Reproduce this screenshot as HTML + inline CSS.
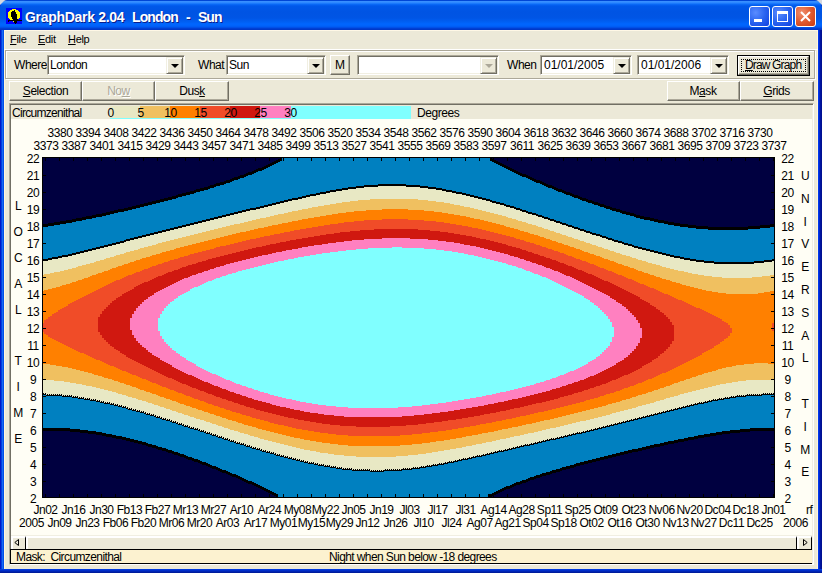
<!DOCTYPE html><html><head><meta charset="utf-8"><style>
*{margin:0;padding:0;box-sizing:border-box}
html,body{width:822px;height:573px;overflow:hidden;background:#d4d0c8}
body{position:relative;font-family:"Liberation Sans",sans-serif;font-size:11px;color:#000}
.a{position:absolute}
.t{position:absolute;white-space:nowrap;line-height:14px;font-size:12px;letter-spacing:-0.45px}
.m{font-size:11px;line-height:13px;letter-spacing:-0.3px}
.m u{text-underline-offset:1px}
.c{text-align:center}
u{text-decoration:underline;text-underline-offset:1px;text-decoration-thickness:1px}
.btn{position:absolute;background:#ece9d8;border-top:1px solid #fff;border-left:1px solid #fff;border-right:1px solid #716f64;border-bottom:1px solid #716f64;box-shadow:inset -1px -1px 0 #aca899;text-align:center}
.sunk{position:absolute;background:#fff;border-top:1px solid #aca899;border-left:1px solid #aca899;border-right:1px solid #fff;border-bottom:1px solid #fff;box-shadow:inset 1px 1px 0 #716f64,inset -1px -1px 0 #f1efe2}
.dd{position:absolute;background:#ece9d8;border-top:1px solid #f1efe2;border-left:1px solid #f1efe2;border-right:1px solid #716f64;border-bottom:1px solid #716f64;box-shadow:inset 1px 1px 0 #fff,inset -1px -1px 0 #aca899}
.arr{position:absolute;width:0;height:0;border-left:4px solid transparent;border-right:4px solid transparent;border-top:4px solid #000}
</style></head><body>
<div class="a" style="left:0;top:0;width:822px;height:573px;background:linear-gradient(to right,#0018c8 0,#0018c8 1px,#0040e0 1px,#0040e0 2px,#1868f4 2px,#1868f4 3px,#0050e8 3px,#0050e8 4px,transparent 4px,transparent 818px,#0040f0 818px,#0030e8 819px,#0018b0 820px,#001090 821px)"></div>
<div class="a" style="left:0;top:0;width:822px;height:30px;border-radius:7px 7px 0 0;background:linear-gradient(to bottom,#0046d6 0,#0046d6 1px,#3d92ff 1px,#2a86ff 3px,#0c6df9 4px,#0058ea 6px,#0054e3 12px,#0055e5 18px,#0060f4 22px,#0066ff 24px,#0062fa 26px,#0058f0 27px,#0048e0 28px,#0038c8 29px,#0038c8 30px)"></div>
<div class="a" style="left:0;top:569px;width:822px;height:4px;background:linear-gradient(to bottom,#0040e8,#0028c0 2px,#001890)"></div>
<div class="a" style="left:4px;top:30px;width:814px;height:539px;background:#ece9d8;border-left:1px solid #fff5dc;border-right:1px solid #fff5dc;border-top:1px solid #fff8e6"></div>
<svg class="a" style="left:6px;top:8px" width="16" height="16" shape-rendering="crispEdges"><rect width="16" height="16" fill="#0000ff"/><rect x="6" y="1" width="4" height="1" fill="#ffff00"/><rect x="4" y="2" width="8" height="1" fill="#ffff00"/><rect x="8" y="2" width="1" height="1" fill="#000"/><rect x="3" y="3" width="10" height="1" fill="#ffff00"/><rect x="6" y="3" width="3" height="1" fill="#000"/><rect x="2" y="4" width="12" height="1" fill="#ffff00"/><rect x="5" y="4" width="5" height="1" fill="#000"/><rect x="2" y="5" width="12" height="1" fill="#ffff00"/><rect x="5" y="5" width="5" height="1" fill="#000"/><rect x="2" y="6" width="12" height="1" fill="#ffff00"/><rect x="5" y="6" width="6" height="1" fill="#000"/><rect x="2" y="7" width="12" height="1" fill="#ffff00"/><rect x="5" y="7" width="6" height="1" fill="#000"/><rect x="2" y="8" width="12" height="1" fill="#ffff00"/><rect x="5" y="8" width="6" height="1" fill="#000"/><rect x="2" y="9" width="12" height="1" fill="#ffff00"/><rect x="6" y="9" width="5" height="1" fill="#000"/><rect x="3" y="10" width="10" height="1" fill="#ffff00"/><rect x="6" y="10" width="5" height="1" fill="#000"/><rect x="4" y="11" width="8" height="1" fill="#ffff00"/><rect x="7" y="11" width="5" height="1" fill="#000"/><rect x="2" y="12" width="14" height="1" fill="#000"/><rect x="2" y="13" width="1" height="1" fill="#000"/><rect x="7" y="13" width="1" height="1" fill="#ffff00"/><rect x="8" y="13" width="3" height="1" fill="#000"/><rect x="8" y="14" width="3" height="1" fill="#000"/><rect x="9" y="15" width="1" height="1" fill="#000"/></svg>
<div class="t " style="left:25px;top:9px;top:9px;font-size:14px;line-height:16px;font-weight:bold;color:#fff;text-shadow:1px 1px 0 #0a1e8c;letter-spacing:-0.3px">GraphDark 2.04</div>
<div class="t " style="left:132px;top:9px;top:9px;font-size:14px;line-height:16px;font-weight:bold;color:#fff;text-shadow:1px 1px 0 #0a1e8c;letter-spacing:-0.9px">London</div>
<div class="t " style="left:186px;top:9px;top:9px;font-size:14px;line-height:16px;font-weight:bold;color:#fff;text-shadow:1px 1px 0 #0a1e8c;">-</div>
<div class="t " style="left:198px;top:9px;top:9px;font-size:14px;line-height:16px;font-weight:bold;color:#fff;text-shadow:1px 1px 0 #0a1e8c;letter-spacing:-1px">Sun</div>
<div class="a" style="left:749px;top:6px;width:21px;height:21px;border:1px solid #fff;border-radius:3px;background:radial-gradient(circle at 30% 30%,#5a8cff 0,#2a64f0 50%,#1040e0 100%)"></div>
<div class="a" style="left:772px;top:6px;width:21px;height:21px;border:1px solid #fff;border-radius:3px;background:radial-gradient(circle at 30% 30%,#5a8cff 0,#2a64f0 50%,#1040e0 100%)"></div>
<div class="a" style="left:795px;top:6px;width:21px;height:21px;border:1px solid #fff;border-radius:3px;background:radial-gradient(circle at 30% 30%,#f09070 0,#e05a30 50%,#c83a10 100%)"></div>
<div class="a" style="left:754px;top:19px;width:8px;height:3px;background:#fff"></div>
<div class="a" style="left:777px;top:11px;width:11px;height:11px;border:1px solid #fff;border-top-width:3px"></div>
<svg class="a" style="left:799px;top:10px" width="13" height="13"><path d="M2 2L11 11M11 2L2 11" stroke="#fff" stroke-width="2"/></svg>
<div class="t m" style="left:10px;top:33px;"><u>F</u>ile</div>
<div class="t m" style="left:38px;top:33px;"><u>E</u>dit</div>
<div class="t m" style="left:68px;top:33px;"><u>H</u>elp</div>
<div class="a" style="left:4px;top:49px;width:814px;height:1px;background:#fff"></div>
<div class="a" style="left:5px;top:50px;width:810px;height:29px;border:1px solid #aca899;box-shadow:inset 1px 1px 0 #fff,1px 1px 0 #fff"></div>
<div class="t " style="left:14px;top:58px;">Where</div>
<div class="sunk" style="left:47px;top:55px;width:138px;height:20px"></div><div class="t " style="left:50px;top:58px;">London</div><div class="dd" style="left:166px;top:57px;width:17px;height:17px"></div><div class="arr" style="left:171px;top:64px;border-top-color:#000"></div>
<div class="t " style="left:198px;top:58px;">What</div>
<div class="sunk" style="left:226px;top:55px;width:100px;height:20px"></div><div class="t " style="left:229px;top:58px;">Sun</div><div class="dd" style="left:307px;top:57px;width:17px;height:17px"></div><div class="arr" style="left:312px;top:64px;border-top-color:#000"></div>
<div class="btn" style="left:330px;top:55px;width:20px;height:20px"></div><div class="t " style="left:335px;top:58px;">M</div>
<div class="sunk" style="left:357px;top:55px;width:142px;height:20px"></div><div class="dd" style="left:480px;top:57px;width:17px;height:17px"></div><div class="arr" style="left:485px;top:64px;border-top-color:#aca899"></div>
<div class="t " style="left:507px;top:58px;">When</div>
<div class="sunk" style="left:540px;top:55px;width:92px;height:20px"></div><div class="dd" style="left:613px;top:57px;width:17px;height:17px"></div><div class="arr" style="left:618px;top:64px;border-top-color:#000"></div>
<div class="t " style="left:544px;top:58px;letter-spacing:0">01/01/2005</div>
<div class="sunk" style="left:637px;top:55px;width:92px;height:20px"></div><div class="dd" style="left:710px;top:57px;width:17px;height:17px"></div><div class="arr" style="left:715px;top:64px;border-top-color:#000"></div>
<div class="t " style="left:641px;top:58px;letter-spacing:0">01/01/2006</div>
<div class="a" style="left:737px;top:55px;width:73px;height:21px;border:1px solid #000;"><div class="btn" style="left:0;top:0;width:71px;height:19px"></div><div class="a" style="left:3px;top:3px;width:65px;height:13px;border:1px dotted #000"></div></div>
<div class="t " style="left:745px;top:58px;letter-spacing:-0.85px"><u>D</u>raw Graph</div>
<div class="btn" style="left:9px;top:81px;width:73px;height:20px"></div><div class="t c" style="left:10.5px;top:84px;width:70px;"><u>S</u>election</div>
<div class="btn" style="left:82px;top:81px;width:73px;height:20px"></div><div class="t c" style="left:83.5px;top:84px;width:70px;color:#aca899;text-shadow:1px 1px 0 #fff">No<u>w</u></div>
<div class="btn" style="left:155px;top:81px;width:74px;height:20px"></div><div class="t c" style="left:157.0px;top:84px;width:70px;">Dus<u>k</u></div>
<div class="btn" style="left:667px;top:81px;width:73px;height:20px"></div><div class="t c" style="left:668.0px;top:84px;width:70px;">M<u>a</u>sk</div>
<div class="btn" style="left:740px;top:81px;width:74px;height:20px"></div><div class="t c" style="left:741.5px;top:84px;width:70px;"><u>G</u>rids</div>
<div class="a" style="left:9px;top:103px;width:805px;height:462px;border-top:1px solid #aca899;border-left:1px solid #aca899;border-right:1px solid #fff;border-bottom:1px solid #fff;box-shadow:inset 1px 1px 0 #716f64,inset -1px -1px 0 #f1efe2"></div>
<div class="a" style="left:11px;top:119px;width:801px;height:416px;background:#fffef5"></div>
<div class="t " style="left:12px;top:106px;letter-spacing:-0.7px">Circumzenithal</div>
<div class="a" style="left:110px;top:106px;width:30px;height:12px;background:#e8e8c4"></div>
<div class="a" style="left:140px;top:106px;width:30px;height:12px;background:#f0c060"></div>
<div class="a" style="left:170px;top:106px;width:30px;height:12px;background:#ff8000"></div>
<div class="a" style="left:200px;top:106px;width:30px;height:12px;background:#f04c28"></div>
<div class="a" style="left:230px;top:106px;width:30px;height:12px;background:#d01810"></div>
<div class="a" style="left:260px;top:106px;width:31px;height:12px;background:#ff80c0"></div>
<div class="a" style="left:291px;top:106px;width:120px;height:12px;background:#80ffff"></div>
<div class="a" style="left:110px;top:118px;width:301px;height:1px;background:#80ffff"></div>
<div class="t c" style="left:95.5px;top:106px;width:30px;">0</div>
<div class="t c" style="left:125.5px;top:106px;width:30px;">5</div>
<div class="t c" style="left:155.5px;top:106px;width:30px;">10</div>
<div class="t c" style="left:185.5px;top:106px;width:30px;">15</div>
<div class="t c" style="left:215.5px;top:106px;width:30px;">20</div>
<div class="t c" style="left:245.5px;top:106px;width:30px;">25</div>
<div class="t c" style="left:275.5px;top:106px;width:30px;">30</div>
<div class="t " style="left:417px;top:106px;">Degrees</div>
<div class="t c" style="left:45.0px;top:126px;width:30px;">3380</div>
<div class="t c" style="left:73.0px;top:126px;width:30px;">3394</div>
<div class="t c" style="left:101.0px;top:126px;width:30px;">3408</div>
<div class="t c" style="left:129.0px;top:126px;width:30px;">3422</div>
<div class="t c" style="left:157.0px;top:126px;width:30px;">3436</div>
<div class="t c" style="left:185.0px;top:126px;width:30px;">3450</div>
<div class="t c" style="left:213.0px;top:126px;width:30px;">3464</div>
<div class="t c" style="left:241.0px;top:126px;width:30px;">3478</div>
<div class="t c" style="left:269.0px;top:126px;width:30px;">3492</div>
<div class="t c" style="left:297.0px;top:126px;width:30px;">3506</div>
<div class="t c" style="left:325.0px;top:126px;width:30px;">3520</div>
<div class="t c" style="left:353.0px;top:126px;width:30px;">3534</div>
<div class="t c" style="left:381.0px;top:126px;width:30px;">3548</div>
<div class="t c" style="left:409.0px;top:126px;width:30px;">3562</div>
<div class="t c" style="left:437.0px;top:126px;width:30px;">3576</div>
<div class="t c" style="left:465.0px;top:126px;width:30px;">3590</div>
<div class="t c" style="left:493.0px;top:126px;width:30px;">3604</div>
<div class="t c" style="left:521.0px;top:126px;width:30px;">3618</div>
<div class="t c" style="left:549.0px;top:126px;width:30px;">3632</div>
<div class="t c" style="left:577.0px;top:126px;width:30px;">3646</div>
<div class="t c" style="left:605.0px;top:126px;width:30px;">3660</div>
<div class="t c" style="left:633.0px;top:126px;width:30px;">3674</div>
<div class="t c" style="left:661.0px;top:126px;width:30px;">3688</div>
<div class="t c" style="left:689.0px;top:126px;width:30px;">3702</div>
<div class="t c" style="left:717.0px;top:126px;width:30px;">3716</div>
<div class="t c" style="left:745.0px;top:126px;width:30px;">3730</div>
<div class="t c" style="left:31.0px;top:139px;width:30px;">3373</div>
<div class="t c" style="left:59.0px;top:139px;width:30px;">3387</div>
<div class="t c" style="left:87.0px;top:139px;width:30px;">3401</div>
<div class="t c" style="left:115.0px;top:139px;width:30px;">3415</div>
<div class="t c" style="left:143.0px;top:139px;width:30px;">3429</div>
<div class="t c" style="left:171.0px;top:139px;width:30px;">3443</div>
<div class="t c" style="left:199.0px;top:139px;width:30px;">3457</div>
<div class="t c" style="left:227.0px;top:139px;width:30px;">3471</div>
<div class="t c" style="left:255.0px;top:139px;width:30px;">3485</div>
<div class="t c" style="left:283.0px;top:139px;width:30px;">3499</div>
<div class="t c" style="left:311.0px;top:139px;width:30px;">3513</div>
<div class="t c" style="left:339.0px;top:139px;width:30px;">3527</div>
<div class="t c" style="left:367.0px;top:139px;width:30px;">3541</div>
<div class="t c" style="left:395.0px;top:139px;width:30px;">3555</div>
<div class="t c" style="left:423.0px;top:139px;width:30px;">3569</div>
<div class="t c" style="left:451.0px;top:139px;width:30px;">3583</div>
<div class="t c" style="left:479.0px;top:139px;width:30px;">3597</div>
<div class="t c" style="left:507.0px;top:139px;width:30px;">3611</div>
<div class="t c" style="left:535.0px;top:139px;width:30px;">3625</div>
<div class="t c" style="left:563.0px;top:139px;width:30px;">3639</div>
<div class="t c" style="left:591.0px;top:139px;width:30px;">3653</div>
<div class="t c" style="left:619.0px;top:139px;width:30px;">3667</div>
<div class="t c" style="left:647.0px;top:139px;width:30px;">3681</div>
<div class="t c" style="left:675.0px;top:139px;width:30px;">3695</div>
<div class="t c" style="left:703.0px;top:139px;width:30px;">3709</div>
<div class="t c" style="left:731.0px;top:139px;width:30px;">3723</div>
<div class="t c" style="left:759.0px;top:139px;width:30px;">3737</div>
<div class="t c" style="left:30.5px;top:503px;width:30px;">Jn02</div>
<div class="t c" style="left:58.5px;top:503px;width:30px;">Jn16</div>
<div class="t c" style="left:86.5px;top:503px;width:30px;">Jn30</div>
<div class="t c" style="left:114.5px;top:503px;width:30px;">Fb13</div>
<div class="t c" style="left:142.5px;top:503px;width:30px;">Fb27</div>
<div class="t c" style="left:170.5px;top:503px;width:30px;">Mr13</div>
<div class="t c" style="left:198.5px;top:503px;width:30px;">Mr27</div>
<div class="t c" style="left:226.5px;top:503px;width:30px;">Ar10</div>
<div class="t c" style="left:254.5px;top:503px;width:30px;">Ar24</div>
<div class="t c" style="left:282.5px;top:503px;width:30px;">My08</div>
<div class="t c" style="left:310.5px;top:503px;width:30px;">My22</div>
<div class="t c" style="left:338.5px;top:503px;width:30px;">Jn05</div>
<div class="t c" style="left:366.5px;top:503px;width:30px;">Jn19</div>
<div class="t c" style="left:394.5px;top:503px;width:30px;">Jl03</div>
<div class="t c" style="left:422.5px;top:503px;width:30px;">Jl17</div>
<div class="t c" style="left:450.5px;top:503px;width:30px;">Jl31</div>
<div class="t c" style="left:478.5px;top:503px;width:30px;">Ag14</div>
<div class="t c" style="left:506.5px;top:503px;width:30px;">Ag28</div>
<div class="t c" style="left:534.5px;top:503px;width:30px;">Sp11</div>
<div class="t c" style="left:562.5px;top:503px;width:30px;">Sp25</div>
<div class="t c" style="left:590.5px;top:503px;width:30px;">Ot09</div>
<div class="t c" style="left:618.5px;top:503px;width:30px;">Ot23</div>
<div class="t c" style="left:646.5px;top:503px;width:30px;">Nv06</div>
<div class="t c" style="left:674.5px;top:503px;width:30px;">Nv20</div>
<div class="t c" style="left:702.5px;top:503px;width:30px;">Dc04</div>
<div class="t c" style="left:730.5px;top:503px;width:30px;">Dc18</div>
<div class="t c" style="left:758.5px;top:503px;width:30px;">Jn01</div>
<div class="t c" style="left:16.5px;top:516px;width:30px;">2005</div>
<div class="t c" style="left:44.5px;top:516px;width:30px;">Jn09</div>
<div class="t c" style="left:72.5px;top:516px;width:30px;">Jn23</div>
<div class="t c" style="left:100.5px;top:516px;width:30px;">Fb06</div>
<div class="t c" style="left:128.5px;top:516px;width:30px;">Fb20</div>
<div class="t c" style="left:156.5px;top:516px;width:30px;">Mr06</div>
<div class="t c" style="left:184.5px;top:516px;width:30px;">Mr20</div>
<div class="t c" style="left:212.5px;top:516px;width:30px;">Ar03</div>
<div class="t c" style="left:240.5px;top:516px;width:30px;">Ar17</div>
<div class="t c" style="left:268.5px;top:516px;width:30px;">My01</div>
<div class="t c" style="left:296.5px;top:516px;width:30px;">My15</div>
<div class="t c" style="left:324.5px;top:516px;width:30px;">My29</div>
<div class="t c" style="left:352.5px;top:516px;width:30px;">Jn12</div>
<div class="t c" style="left:380.5px;top:516px;width:30px;">Jn26</div>
<div class="t c" style="left:408.5px;top:516px;width:30px;">Jl10</div>
<div class="t c" style="left:436.5px;top:516px;width:30px;">Jl24</div>
<div class="t c" style="left:464.5px;top:516px;width:30px;">Ag07</div>
<div class="t c" style="left:492.5px;top:516px;width:30px;">Ag21</div>
<div class="t c" style="left:520.5px;top:516px;width:30px;">Sp04</div>
<div class="t c" style="left:548.5px;top:516px;width:30px;">Sp18</div>
<div class="t c" style="left:576.5px;top:516px;width:30px;">Ot02</div>
<div class="t c" style="left:604.5px;top:516px;width:30px;">Ot16</div>
<div class="t c" style="left:632.5px;top:516px;width:30px;">Ot30</div>
<div class="t c" style="left:660.5px;top:516px;width:30px;">Nv13</div>
<div class="t c" style="left:688.5px;top:516px;width:30px;">Nv27</div>
<div class="t c" style="left:716.5px;top:516px;width:30px;">Dc11</div>
<div class="t c" style="left:744.5px;top:516px;width:30px;">Dc25</div>
<div class="t " style="left:783px;top:516px;">2006</div>
<div class="t " style="left:806px;top:503px;">rf</div>
<div class="t c" style="left:23.0px;top:492px;width:20px;">2</div>
<div class="t c" style="left:777.5px;top:492px;width:20px;">2</div>
<div class="t c" style="left:23.0px;top:475px;width:20px;">3</div>
<div class="t c" style="left:777.5px;top:475px;width:20px;">3</div>
<div class="t c" style="left:23.0px;top:458px;width:20px;">4</div>
<div class="t c" style="left:777.5px;top:458px;width:20px;">4</div>
<div class="t c" style="left:23.0px;top:441px;width:20px;">5</div>
<div class="t c" style="left:777.5px;top:441px;width:20px;">5</div>
<div class="t c" style="left:23.0px;top:424px;width:20px;">6</div>
<div class="t c" style="left:777.5px;top:424px;width:20px;">6</div>
<div class="t c" style="left:23.0px;top:407px;width:20px;">7</div>
<div class="t c" style="left:777.5px;top:407px;width:20px;">7</div>
<div class="t c" style="left:23.0px;top:390px;width:20px;">8</div>
<div class="t c" style="left:777.5px;top:390px;width:20px;">8</div>
<div class="t c" style="left:23.0px;top:373px;width:20px;">9</div>
<div class="t c" style="left:777.5px;top:373px;width:20px;">9</div>
<div class="t c" style="left:23.0px;top:356px;width:20px;">10</div>
<div class="t c" style="left:777.5px;top:356px;width:20px;">10</div>
<div class="t c" style="left:23.0px;top:339px;width:20px;">11</div>
<div class="t c" style="left:777.5px;top:339px;width:20px;">11</div>
<div class="t c" style="left:23.0px;top:322px;width:20px;">12</div>
<div class="t c" style="left:777.5px;top:322px;width:20px;">12</div>
<div class="t c" style="left:23.0px;top:305px;width:20px;">13</div>
<div class="t c" style="left:777.5px;top:305px;width:20px;">13</div>
<div class="t c" style="left:23.0px;top:288px;width:20px;">14</div>
<div class="t c" style="left:777.5px;top:288px;width:20px;">14</div>
<div class="t c" style="left:23.0px;top:271px;width:20px;">15</div>
<div class="t c" style="left:777.5px;top:271px;width:20px;">15</div>
<div class="t c" style="left:23.0px;top:254px;width:20px;">16</div>
<div class="t c" style="left:777.5px;top:254px;width:20px;">16</div>
<div class="t c" style="left:23.0px;top:237px;width:20px;">17</div>
<div class="t c" style="left:777.5px;top:237px;width:20px;">17</div>
<div class="t c" style="left:23.0px;top:220px;width:20px;">18</div>
<div class="t c" style="left:777.5px;top:220px;width:20px;">18</div>
<div class="t c" style="left:23.0px;top:203px;width:20px;">19</div>
<div class="t c" style="left:777.5px;top:203px;width:20px;">19</div>
<div class="t c" style="left:23.0px;top:186px;width:20px;">20</div>
<div class="t c" style="left:777.5px;top:186px;width:20px;">20</div>
<div class="t c" style="left:23.0px;top:169px;width:20px;">21</div>
<div class="t c" style="left:777.5px;top:169px;width:20px;">21</div>
<div class="t c" style="left:23.0px;top:152px;width:20px;">22</div>
<div class="t c" style="left:777.5px;top:152px;width:20px;">22</div>
<div class="t c" style="left:11.0px;top:199px;width:14px;">L</div>
<div class="t c" style="left:11.0px;top:225px;width:14px;">O</div>
<div class="t c" style="left:11.0px;top:251px;width:14px;">C</div>
<div class="t c" style="left:11.0px;top:277px;width:14px;">A</div>
<div class="t c" style="left:11.0px;top:303px;width:14px;">L</div>
<div class="t c" style="left:11.0px;top:354px;width:14px;">T</div>
<div class="t c" style="left:11.0px;top:380px;width:14px;">I</div>
<div class="t c" style="left:11.0px;top:406px;width:14px;">M</div>
<div class="t c" style="left:11.0px;top:432px;width:14px;">E</div>
<div class="t c" style="left:798.0px;top:169px;width:14px;">U</div>
<div class="t c" style="left:798.0px;top:192px;width:14px;">N</div>
<div class="t c" style="left:798.0px;top:215px;width:14px;">I</div>
<div class="t c" style="left:798.0px;top:237px;width:14px;">V</div>
<div class="t c" style="left:798.0px;top:260px;width:14px;">E</div>
<div class="t c" style="left:798.0px;top:283px;width:14px;">R</div>
<div class="t c" style="left:798.0px;top:306px;width:14px;">S</div>
<div class="t c" style="left:798.0px;top:329px;width:14px;">A</div>
<div class="t c" style="left:798.0px;top:351px;width:14px;">L</div>
<div class="t c" style="left:798.0px;top:397px;width:14px;">T</div>
<div class="t c" style="left:798.0px;top:420px;width:14px;">I</div>
<div class="t c" style="left:798.0px;top:443px;width:14px;">M</div>
<div class="t c" style="left:798.0px;top:465px;width:14px;">E</div>
<svg width="733" height="341" viewBox="42 157 733 341" style="position:absolute;left:42px;top:157px" shape-rendering="crispEdges"><rect x="42" y="157" width="733" height="341" fill="#000"/><rect x="43" y="158" width="731" height="339" fill="#000040"/><path fill="#0080c0" d="M42 225V225H44V225H46V225H48V224H50V224H52V224H54V223H56V223H58V223H60V222H62V222H64V222H66V221H68V221H70V221H72V220H74V220H76V219H78V219H80V219H82V218H84V218H86V217H88V217H90V217H92V216H94V216H96V215H98V215H100V215H102V214H104V214H106V213H108V213H110V212H112V212H114V211H116V211H118V210H120V210H122V210H124V209H126V209H128V208H130V208H132V207H134V207H136V206H138V206H140V205H142V205H144V204H146V204H148V203H150V203H152V202H154V202H156V201H158V201H160V200H162V200H164V199H166V199H168V198H170V198H172V197H174V197H176V196H178V195H180V195H182V194H184V194H186V193H188V193H190V192H192V192H194V191H196V190H198V190H200V189H202V189H204V188H206V188H208V187H210V186H212V186H214V185H216V184H218V184H220V183H222V183H224V182H226V181H228V181H230V180H232V179H234V178H236V178H238V177H240V176H242V176H244V175H246V174H248V173H250V173H252V172H254V171H256V170H258V169H260V169H262V168H264V167H266V166H268V165H270V164H272V163H274V162H276V161H278V160H280V159H282V158H284V158H286V158H288V158H290V158H292V158H294V158H296V158H298V158H300V158H302V158H304V158H306V158H308V158H310V158H312V158H314V158H316V158H318V158H320V158H322V158H324V158H326V158H328V158H330V158H332V158H334V158H336V158H338V158H340V158H342V158H344V158H346V158H348V158H350V158H352V158H354V158H356V158H358V158H360V158H362V158H364V158H366V158H368V158H370V158H372V158H374V158H376V158H378V158H380V158H382V158H384V158H386V158H388V158H390V158H392V158H394V158H396V158H398V158H400V158H402V158H404V158H406V158H408V158H410V158H412V158H414V158H416V158H418V158H420V158H422V158H424V158H426V158H428V158H430V158H432V158H434V158H436V158H438V158H440V158H442V158H444V158H446V158H448V158H450V158H452V158H454V158H456V158H458V158H460V158H462V158H464V158H466V158H468V158H470V158H472V158H474V158H476V158H478V158H480V158H482V158H484V158H486V158H488V158H490V159H492V160H494V161H496V162H498V163H500V164H502V165H504V166H506V167H508V168H510V169H512V170H514V171H516V172H518V173H520V174H522V175H524V175H526V176H528V177H530V178H532V179H534V180H536V181H538V181H540V182H542V183H544V184H546V185H548V186H550V186H552V187H554V188H556V189H558V190H560V190H562V191H564V192H566V193H568V193H570V194H572V195H574V196H576V196H578V197H580V198H582V199H584V199H586V200H588V201H590V201H592V202H594V203H596V203H598V204H600V205H602V205H604V206H606V207H608V207H610V208H612V209H614V209H616V210H618V210H620V211H622V212H624V212H626V213H628V213H630V214H632V214H634V215H636V216H638V216H640V217H642V217H644V218H646V218H648V218H650V219H652V219H654V220H656V220H658V221H660V221H662V221H664V222H666V222H668V223H670V223H672V223H674V224H676V224H678V224H680V225H682V225H684V225H686V225H688V226H690V226H692V226H694V226H696V227H698V227H700V227H702V227H704V227H706V227H708V228H710V228H712V228H714V228H716V228H718V228H720V228H722V228H724V228H726V228H728V228H730V228H732V228H734V228H736V228H738V228H740V228H742V228H744V228H746V228H748V227H750V227H752V227H754V227H756V227H758V227H760V226H762V226H764V226H766V226H768V226H770V225H772V225H774V430H772V430H770V430H768V430H766V430H764V430H762V430H760V430H758V430H756V430H754V430H752V430H750V431H748V431H746V431H744V431H742V431H740V432H738V432H736V432H734V432H732V432H730V433H728V433H726V433H724V433H722V434H720V434H718V434H716V435H714V435H712V435H710V436H708V436H706V436H704V437H702V437H700V437H698V438H696V438H694V439H692V439H690V439H688V440H686V440H684V441H682V441H680V441H678V442H676V442H674V443H672V443H670V443H668V444H666V444H664V445H662V445H660V446H658V446H656V446H654V447H652V447H650V448H648V448H646V449H644V449H642V450H640V450H638V451H636V451H634V451H632V452H630V452H628V453H626V453H624V454H622V454H620V455H618V455H616V456H614V456H612V457H610V457H608V458H606V458H604V459H602V459H600V460H598V460H596V461H594V461H592V462H590V462H588V463H586V463H584V464H582V464H580V465H578V465H576V466H574V467H572V467H570V468H568V468H566V469H564V469H562V470H560V471H558V471H556V472H554V472H552V473H550V474H548V474H546V475H544V475H542V476H540V477H538V477H536V478H534V479H532V479H530V480H528V481H526V482H524V482H522V483H520V484H518V484H516V485H514V486H512V487H510V488H508V488H506V489H504V490H502V491H500V492H498V493H496V494H494V495H492V496H490V496H488V497H486V497H484V497H482V497H480V497H478V497H476V497H474V497H472V497H470V497H468V497H466V497H464V497H462V497H460V497H458V497H456V497H454V497H452V497H450V497H448V497H446V497H444V497H442V497H440V497H438V497H436V497H434V497H432V497H430V497H428V497H426V497H424V497H422V497H420V497H418V497H416V497H414V497H412V497H410V497H408V497H406V497H404V497H402V497H400V497H398V497H396V497H394V497H392V497H390V497H388V497H386V497H384V497H382V497H380V497H378V497H376V497H374V497H372V497H370V497H368V497H366V497H364V497H362V497H360V497H358V497H356V497H354V497H352V497H350V497H348V497H346V497H344V497H342V497H340V497H338V497H336V497H334V497H332V497H330V497H328V497H326V497H324V497H322V497H320V497H318V497H316V497H314V497H312V497H310V497H308V497H306V497H304V497H302V497H300V497H298V497H296V497H294V497H292V497H290V497H288V497H286V497H284V497H282V497H280V497H278V496H276V495H274V494H272V493H270V492H268V491H266V490H264V489H262V488H260V487H258V486H256V485H254V484H252V483H250V483H248V482H246V481H244V480H242V479H240V478H238V477H236V476H234V476H232V475H230V474H228V473H226V472H224V472H222V471H220V470H218V469H216V468H214V468H212V467H210V466H208V465H206V464H204V464H202V463H200V462H198V461H196V461H194V460H192V459H190V459H188V458H186V457H184V456H182V456H180V455H178V454H176V454H174V453H172V452H170V452H168V451H166V450H164V450H162V449H160V449H158V448H156V447H154V447H152V446H150V446H148V445H146V444H144V444H142V443H140V443H138V442H136V442H134V441H132V441H130V440H128V440H126V439H124V439H122V438H120V438H118V438H116V437H114V437H112V436H110V436H108V436H106V435H104V435H102V434H100V434H98V434H96V433H94V433H92V433H90V433H88V432H86V432H84V432H82V432H80V431H78V431H76V431H74V431H72V431H70V430H68V430H66V430H64V430H62V430H60V430H58V430H56V430H54V430H52V430H50V430H48V430H46V430H44V430H42Z"/><path fill="#e8e8c4" d="M42 261V261H44V261H46V261H48V260H50V260H52V259H54V259H56V259H58V258H60V258H62V257H64V257H66V257H68V256H70V256H72V255H74V255H76V254H78V254H80V253H82V253H84V252H86V252H88V251H90V251H92V250H94V250H96V249H98V249H100V248H102V248H104V247H106V247H108V246H110V246H112V245H114V245H116V244H118V244H120V243H122V243H124V242H126V241H128V241H130V240H132V240H134V239H136V239H138V238H140V238H142V237H144V237H146V236H148V236H150V235H152V235H154V234H156V234H158V233H160V233H162V232H164V232H166V231H168V231H170V230H172V230H174V229H176V229H178V228H180V228H182V227H184V227H186V226H188V226H190V225H192V225H194V224H196V224H198V223H200V223H202V222H204V222H206V221H208V221H210V220H212V220H214V219H216V219H218V218H220V218H222V217H224V217H226V216H228V216H230V215H232V215H234V214H236V214H238V213H240V213H242V212H244V212H246V211H248V211H250V210H252V210H254V210H256V209H258V209H260V208H262V208H264V207H266V207H268V206H270V206H272V205H274V205H276V204H278V204H280V203H282V203H284V202H286V202H288V201H290V201H292V200H294V200H296V200H298V199H300V199H302V198H304V198H306V197H308V197H310V196H312V196H314V196H316V195H318V195H320V194H322V194H324V194H326V193H328V193H330V192H332V192H334V192H336V191H338V191H340V191H342V190H344V190H346V190H348V189H350V189H352V189H354V189H356V188H358V188H360V188H362V188H364V187H366V187H368V187H370V187H372V187H374V187H376V187H378V186H380V186H382V186H384V186H386V186H388V186H390V186H392V186H394V186H396V186H398V186H400V186H402V186H404V186H406V187H408V187H410V187H412V187H414V187H416V187H418V187H420V188H422V188H424V188H426V188H428V189H430V189H432V189H434V189H436V190H438V190H440V190H442V191H444V191H446V192H448V192H450V192H452V193H454V193H456V194H458V194H460V194H462V195H464V195H466V196H468V196H470V197H472V197H474V198H476V198H478V199H480V199H482V200H484V200H486V201H488V201H490V202H492V203H494V203H496V204H498V204H500V205H502V205H504V206H506V207H508V207H510V208H512V208H514V209H516V210H518V210H520V211H522V212H524V212H526V213H528V214H530V214H532V215H534V215H536V216H538V217H540V217H542V218H544V219H546V219H548V220H550V221H552V221H554V222H556V223H558V223H560V224H562V225H564V225H566V226H568V227H570V227H572V228H574V229H576V229H578V230H580V231H582V231H584V232H586V233H588V233H590V234H592V235H594V235H596V236H598V236H600V237H602V238H604V238H606V239H608V240H610V240H612V241H614V242H616V242H618V243H620V243H622V244H624V245H626V245H628V246H630V246H632V247H634V248H636V248H638V249H640V249H642V250H644V250H646V251H648V251H650V252H652V252H654V253H656V253H658V254H660V254H662V255H664V255H666V256H668V256H670V257H672V257H674V258H676V258H678V258H680V259H682V259H684V260H686V260H688V260H690V261H692V261H694V261H696V262H698V262H700V262H702V262H704V263H706V263H708V263H710V263H712V263H714V264H716V264H718V264H720V264H722V264H724V264H726V264H728V264H730V264H732V264H734V264H736V264H738V264H740V264H742V264H744V264H746V264H748V264H750V264H752V264H754V263H756V263H758V263H760V263H762V263H764V262H766V262H768V262H770V262H772V261H774V393H772V393H770V393H768V393H766V393H764V393H762V394H760V394H758V394H756V394H754V394H752V394H750V394H748V394H746V395H744V395H742V395H740V395H738V395H736V396H734V396H732V396H730V397H728V397H726V397H724V398H722V398H720V398H718V399H716V399H714V399H712V400H710V400H708V401H706V401H704V402H702V402H700V402H698V403H696V403H694V404H692V404H690V405H688V405H686V406H684V406H682V407H680V407H678V408H676V408H674V409H672V409H670V410H668V410H666V411H664V411H662V412H660V412H658V413H656V413H654V414H652V414H650V415H648V415H646V416H644V416H642V417H640V417H638V418H636V418H634V419H632V419H630V420H628V420H626V421H624V421H622V422H620V422H618V423H616V423H614V424H612V424H610V425H608V425H606V426H604V426H602V427H600V427H598V428H596V428H594V429H592V429H590V430H588V430H586V431H584V431H582V432H580V432H578V432H576V433H574V433H572V434H570V434H568V435H566V435H564V436H562V436H560V437H558V437H556V438H554V438H552V438H550V439H548V439H546V440H544V440H542V441H540V441H538V442H536V442H534V443H532V443H530V444H528V444H526V444H524V445H522V445H520V446H518V446H516V447H514V447H512V448H510V448H508V449H506V449H504V450H502V450H500V450H498V451H496V451H494V452H492V452H490V453H488V453H486V454H484V454H482V455H480V455H478V455H476V456H474V456H472V457H470V457H468V458H466V458H464V458H462V459H460V459H458V460H456V460H454V461H452V461H450V461H448V462H446V462H444V463H442V463H440V463H438V464H436V464H434V464H432V465H430V465H428V465H426V466H424V466H422V466H420V467H418V467H416V467H414V467H412V468H410V468H408V468H406V468H404V468H402V469H400V469H398V469H396V469H394V469H392V469H390V469H388V469H386V469H384V470H382V470H380V470H378V470H376V470H374V470H372V470H370V469H368V469H366V469H364V469H362V469H360V469H358V469H356V469H354V469H352V468H350V468H348V468H346V468H344V468H342V467H340V467H338V467H336V466H334V466H332V466H330V465H328V465H326V465H324V464H322V464H320V464H318V463H316V463H314V462H312V462H310V462H308V461H306V461H304V460H302V460H300V459H298V459H296V458H294V458H292V457H290V457H288V456H286V456H284V455H282V455H280V454H278V454H276V453H274V452H272V452H270V451H268V451H266V450H264V450H262V449H260V448H258V448H256V447H254V447H252V446H250V445H248V445H246V444H244V443H242V443H240V442H238V442H236V441H234V440H232V440H230V439H228V438H226V438H224V437H222V436H220V436H218V435H216V434H214V434H212V433H210V432H208V432H206V431H204V430H202V430H200V429H198V428H196V428H194V427H192V427H190V426H188V425H186V425H184V424H182V423H180V423H178V422H176V421H174V421H172V420H170V419H168V419H166V418H164V418H162V417H160V416H158V416H156V415H154V414H152V414H150V413H148V413H146V412H144V411H142V411H140V410H138V410H136V409H134V409H132V408H130V408H128V407H126V406H124V406H122V405H120V405H118V404H116V404H114V403H112V403H110V402H108V402H106V402H104V401H102V401H100V400H98V400H96V399H94V399H92V399H90V398H88V398H86V398H84V397H82V397H80V397H78V396H76V396H74V396H72V395H70V395H68V395H66V395H64V395H62V394H60V394H58V394H56V394H54V394H52V394H50V394H48V394H46V393H44V393H42Z"/><path fill="#f0c060" d="M42 275V275H44V274H46V274H48V274H50V273H52V273H54V272H56V272H58V272H60V271H62V271H64V270H66V270H68V269H70V269H72V268H74V268H76V267H78V266H80V266H82V265H84V265H86V264H88V264H90V263H92V263H94V262H96V261H98V261H100V260H102V260H104V259H106V258H108V258H110V257H112V257H114V256H116V255H118V255H120V254H122V254H124V253H126V252H128V252H130V251H132V251H134V250H136V250H138V249H140V248H142V248H144V247H146V247H148V246H150V246H152V245H154V245H156V244H158V243H160V243H162V242H164V242H166V241H168V241H170V240H172V240H174V239H176V239H178V238H180V238H182V237H184V237H186V236H188V236H190V235H192V235H194V234H196V234H198V233H200V233H202V232H204V232H206V231H208V231H210V230H212V230H214V229H216V229H218V228H220V228H222V227H224V227H226V226H228V226H230V225H232V225H234V224H236V224H238V224H240V223H242V223H244V222H246V222H248V221H250V221H252V220H254V220H256V219H258V219H260V218H262V218H264V218H266V217H268V217H270V216H272V216H274V215H276V215H278V214H280V214H282V214H284V213H286V213H288V212H290V212H292V211H294V211H296V211H298V210H300V210H302V209H304V209H306V209H308V208H310V208H312V207H314V207H316V207H318V206H320V206H322V206H324V205H326V205H328V205H330V204H332V204H334V204H336V203H338V203H340V203H342V202H344V202H346V202H348V202H350V201H352V201H354V201H356V201H358V200H360V200H362V200H364V200H366V200H368V200H370V199H372V199H374V199H376V199H378V199H380V199H382V199H384V199H386V199H388V199H390V199H392V199H394V199H396V199H398V199H400V199H402V199H404V199H406V199H408V199H410V199H412V199H414V199H416V199H418V200H420V200H422V200H424V200H426V200H428V201H430V201H432V201H434V201H436V202H438V202H440V202H442V202H444V203H446V203H448V203H450V204H452V204H454V205H456V205H458V205H460V206H462V206H464V207H466V207H468V207H470V208H472V208H474V209H476V209H478V210H480V210H482V211H484V211H486V212H488V212H490V213H492V213H494V214H496V214H498V215H500V215H502V216H504V216H506V217H508V218H510V218H512V219H514V219H516V220H518V221H520V221H522V222H524V222H526V223H528V224H530V224H532V225H534V225H536V226H538V227H540V227H542V228H544V229H546V229H548V230H550V231H552V231H554V232H556V233H558V233H560V234H562V235H564V235H566V236H568V237H570V237H572V238H574V239H576V239H578V240H580V241H582V241H584V242H586V243H588V243H590V244H592V245H594V245H596V246H598V247H600V247H602V248H604V249H606V249H608V250H610V251H612V251H614V252H616V253H618V253H620V254H622V255H624V255H626V256H628V256H630V257H632V258H634V258H636V259H638V260H640V260H642V261H644V261H646V262H648V263H650V263H652V264H654V264H656V265H658V265H660V266H662V267H664V267H666V268H668V268H670V269H672V269H674V270H676V270H678V271H680V271H682V271H684V272H686V272H688V273H690V273H692V274H694V274H696V274H698V275H700V275H702V275H704V276H706V276H708V276H710V276H712V277H714V277H716V277H718V277H720V277H722V278H724V278H726V278H728V278H730V278H732V278H734V278H736V278H738V278H740V278H742V278H744V278H746V278H748V278H750V278H752V277H754V277H756V277H758V277H760V277H762V276H764V276H766V276H768V276H770V275H772V275H774V380H772V380H770V380H768V380H766V380H764V380H762V380H760V380H758V380H756V380H754V380H752V380H750V380H748V380H746V381H744V381H742V381H740V381H738V382H736V382H734V382H732V383H730V383H728V383H726V384H724V384H722V384H720V385H718V385H716V386H714V386H712V387H710V387H708V388H706V388H704V389H702V389H700V390H698V390H696V391H694V391H692V392H690V392H688V393H686V393H684V394H682V394H680V395H678V396H676V396H674V397H672V397H670V398H668V398H666V399H664V400H662V400H660V401H658V401H656V402H654V403H652V403H650V404H648V404H646V405H644V405H642V406H640V406H638V407H636V408H634V408H632V409H630V409H628V410H626V410H624V411H622V411H620V412H618V412H616V413H614V413H612V414H610V415H608V415H606V416H604V416H602V417H600V417H598V418H596V418H594V419H592V419H590V420H588V420H586V421H584V421H582V421H580V422H578V422H576V423H574V423H572V424H570V424H568V425H566V425H564V426H562V426H560V427H558V427H556V428H554V428H552V428H550V429H548V429H546V430H544V430H542V431H540V431H538V432H536V432H534V433H532V433H530V433H528V434H526V434H524V435H522V435H520V436H518V436H516V436H514V437H512V437H510V438H508V438H506V439H504V439H502V439H500V440H498V440H496V441H494V441H492V442H490V442H488V442H486V443H484V443H482V444H480V444H478V444H476V445H474V445H472V446H470V446H468V446H466V447H464V447H462V448H460V448H458V448H456V449H454V449H452V449H450V450H448V450H446V450H444V451H442V451H440V451H438V452H436V452H434V452H432V453H430V453H428V453H426V454H424V454H422V454H420V454H418V455H416V455H414V455H412V455H410V455H408V456H406V456H404V456H402V456H400V456H398V456H396V457H394V457H392V457H390V457H388V457H386V457H384V457H382V457H380V457H378V457H376V457H374V457H372V457H370V457H368V457H366V457H364V457H362V457H360V457H358V457H356V456H354V456H352V456H350V456H348V456H346V456H344V455H342V455H340V455H338V455H336V455H334V454H332V454H330V454H328V453H326V453H324V453H322V453H320V452H318V452H316V451H314V451H312V451H310V450H308V450H306V450H304V449H302V449H300V448H298V448H296V447H294V447H292V446H290V446H288V445H286V445H284V444H282V444H280V443H278V443H276V442H274V442H272V441H270V441H268V440H266V440H264V439H262V439H260V438H258V437H256V437H254V436H252V436H250V435H248V434H246V434H244V433H242V433H240V432H238V431H236V431H234V430H232V430H230V429H228V428H226V428H224V427H222V426H220V426H218V425H216V424H214V424H212V423H210V422H208V422H206V421H204V420H202V420H200V419H198V419H196V418H194V417H192V417H190V416H188V415H186V415H184V414H182V413H180V413H178V412H176V411H174V411H172V410H170V409H168V409H166V408H164V407H162V407H160V406H158V405H156V405H154V404H152V403H150V403H148V402H146V401H144V401H142V400H140V400H138V399H136V398H134V398H132V397H130V397H128V396H126V395H124V395H122V394H120V394H118V393H116V392H114V392H112V391H110V391H108V390H106V390H104V389H102V389H100V388H98V388H96V387H94V387H92V386H90V386H88V386H86V385H84V385H82V384H80V384H78V384H76V383H74V383H72V383H70V382H68V382H66V382H64V381H62V381H60V381H58V381H56V381H54V380H52V380H50V380H48V380H46V380H44V380H42Z"/><path fill="#ff8000" d="M42 291V291H44V290H46V290H48V289H50V289H52V288H54V288H56V287H58V287H60V286H62V285H64V285H66V284H68V284H70V283H72V282H74V282H76V281H78V280H80V280H82V279H84V278H86V278H88V277H90V276H92V275H94V275H96V274H98V273H100V273H102V272H104V271H106V271H108V270H110V269H112V268H114V268H116V267H118V266H120V266H122V265H124V264H126V264H128V263H130V262H132V262H134V261H136V260H138V260H140V259H142V258H144V258H146V257H148V257H150V256H152V255H154V255H156V254H158V254H160V253H162V252H164V252H166V251H168V251H170V250H172V250H174V249H176V248H178V248H180V247H182V247H184V246H186V246H188V245H190V245H192V244H194V244H196V243H198V243H200V242H202V242H204V241H206V241H208V240H210V240H212V239H214V239H216V238H218V238H220V237H222V237H224V236H226V236H228V235H230V235H232V234H234V234H236V233H238V233H240V232H242V232H244V232H246V231H248V231H250V230H252V230H254V229H256V229H258V228H260V228H262V228H264V227H266V227H268V226H270V226H272V225H274V225H276V225H278V224H280V224H282V223H284V223H286V223H288V222H290V222H292V221H294V221H296V221H298V220H300V220H302V219H304V219H306V219H308V218H310V218H312V218H314V217H316V217H318V217H320V216H322V216H324V216H326V215H328V215H330V215H332V214H334V214H336V214H338V213H340V213H342V213H344V213H346V212H348V212H350V212H352V212H354V211H356V211H358V211H360V211H362V211H364V211H366V210H368V210H370V210H372V210H374V210H376V210H378V210H380V210H382V209H384V209H386V209H388V209H390V209H392V209H394V209H396V209H398V209H400V209H402V209H404V209H406V209H408V210H410V210H412V210H414V210H416V210H418V210H420V210H422V210H424V211H426V211H428V211H430V211H432V211H434V212H436V212H438V212H440V212H442V213H444V213H446V213H448V214H450V214H452V214H454V215H456V215H458V215H460V216H462V216H464V216H466V217H468V217H470V218H472V218H474V219H476V219H478V219H480V220H482V220H484V221H486V221H488V222H490V222H492V223H494V223H496V224H498V224H500V225H502V225H504V226H506V227H508V227H510V228H512V228H514V229H516V229H518V230H520V231H522V231H524V232H526V232H528V233H530V234H532V234H534V235H536V235H538V236H540V237H542V237H544V238H546V239H548V239H550V240H552V241H554V241H556V242H558V243H560V243H562V244H564V245H566V245H568V246H570V247H572V247H574V248H576V249H578V249H580V250H582V251H584V252H586V252H588V253H590V254H592V254H594V255H596V256H598V256H600V257H602V258H604V259H606V259H608V260H610V261H612V261H614V262H616V263H618V264H620V264H622V265H624V266H626V266H628V267H630V268H632V268H634V269H636V270H638V271H640V271H642V272H644V273H646V273H648V274H650V275H652V275H654V276H656V277H658V277H660V278H662V279H664V279H666V280H668V280H670V281H672V282H674V282H676V283H678V283H680V284H682V285H684V285H686V286H688V286H690V287H692V287H694V288H696V288H698V289H700V289H702V290H704V290H706V291H708V291H710V291H712V292H714V292H716V292H718V293H720V293H722V293H724V293H726V294H728V294H730V294H732V294H734V294H736V294H738V294H740V294H742V294H744V294H746V294H748V294H750V294H752V294H754V294H756V294H758V293H760V293H762V293H764V292H766V292H768V292H770V291H772V291H774V364H772V364H770V364H768V363H766V363H764V363H762V363H760V363H758V363H756V363H754V364H752V364H750V364H748V364H746V364H744V365H742V365H740V365H738V365H736V366H734V366H732V367H730V367H728V367H726V368H724V368H722V369H720V369H718V370H716V371H714V371H712V372H710V372H708V373H706V373H704V374H702V375H700V375H698V376H696V377H694V377H692V378H690V379H688V379H686V380H684V381H682V381H680V382H678V383H676V383H674V384H672V385H670V386H668V386H666V387H664V388H662V388H660V389H658V390H656V390H654V391H652V392H650V392H648V393H646V394H644V394H642V395H640V395H638V396H636V397H634V397H632V398H630V399H628V399H626V400H624V400H622V401H620V402H618V402H616V403H614V403H612V404H610V404H608V405H606V406H604V406H602V407H600V407H598V408H596V408H594V409H592V409H590V410H588V410H586V411H584V411H582V412H580V412H578V413H576V413H574V414H572V414H570V415H568V415H566V416H564V416H562V417H560V417H558V418H556V418H554V419H552V419H550V420H548V420H546V420H544V421H542V421H540V422H538V422H536V423H534V423H532V424H530V424H528V424H526V425H524V425H522V426H520V426H518V427H516V427H514V427H512V428H510V428H508V429H506V429H504V429H502V430H500V430H498V431H496V431H494V432H492V432H490V432H488V433H486V433H484V433H482V434H480V434H478V435H476V435H474V435H472V436H470V436H468V436H466V437H464V437H462V438H460V438H458V438H456V439H454V439H452V439H450V440H448V440H446V440H444V441H442V441H440V441H438V441H436V442H434V442H432V442H430V443H428V443H426V443H424V443H422V444H420V444H418V444H416V444H414V444H412V445H410V445H408V445H406V445H404V445H402V445H400V446H398V446H396V446H394V446H392V446H390V446H388V446H386V446H384V446H382V446H380V446H378V446H376V446H374V446H372V446H370V446H368V446H366V446H364V446H362V446H360V446H358V446H356V446H354V446H352V446H350V446H348V445H346V445H344V445H342V445H340V445H338V444H336V444H334V444H332V444H330V443H328V443H326V443H324V443H322V442H320V442H318V442H316V441H314V441H312V441H310V440H308V440H306V440H304V439H302V439H300V438H298V438H296V438H294V437H292V437H290V436H288V436H286V435H284V435H282V434H280V434H278V433H276V433H274V432H272V432H270V431H268V431H266V430H264V430H262V429H260V429H258V428H256V427H254V427H252V426H250V426H248V425H246V425H244V424H242V423H240V423H238V422H236V421H234V421H232V420H230V420H228V419H226V418H224V418H222V417H220V416H218V416H216V415H214V414H212V414H210V413H208V412H206V412H204V411H202V410H200V410H198V409H196V408H194V408H192V407H190V406H188V406H186V405H184V404H182V404H180V403H178V402H176V401H174V401H172V400H170V399H168V399H166V398H164V397H162V397H160V396H158V395H156V394H154V394H152V393H150V392H148V392H146V391H144V390H142V390H140V389H138V388H136V387H134V387H132V386H130V385H128V385H126V384H124V383H122V383H120V382H118V381H116V381H114V380H112V379H110V379H108V378H106V378H104V377H102V376H100V376H98V375H96V375H94V374H92V373H90V373H88V372H86V372H84V371H82V371H80V370H78V370H76V369H74V369H72V368H70V368H68V367H66V367H64V367H62V366H60V366H58V366H56V365H54V365H52V365H50V364H48V364H46V364H44V364H42Z"/><path fill="#f04c28" d="M42 323V323H44V320H46V319H48V317H50V316H52V314H54V313H56V312H58V310H60V309H62V308H64V307H66V306H68V304H70V303H72V302H74V301H76V300H78V299H80V298H82V297H84V296H86V295H88V294H90V293H92V292H94V291H96V290H98V289H100V288H102V287H104V286H106V285H108V284H110V283H112V282H114V281H116V280H118V280H120V279H122V278H124V277H126V276H128V275H130V275H132V274H134V273H136V272H138V272H140V271H142V270H144V269H146V269H148V268H150V267H152V266H154V266H156V265H158V264H160V264H162V263H164V262H166V262H168V261H170V260H172V260H174V259H176V259H178V258H180V257H182V257H184V256H186V256H188V255H190V254H192V254H194V253H196V253H198V252H200V252H202V251H204V251H206V250H208V250H210V249H212V249H214V248H216V247H218V247H220V246H222V246H224V246H226V245H228V245H230V244H232V244H234V243H236V243H238V242H240V242H242V241H244V241H246V240H248V240H250V239H252V239H254V239H256V238H258V238H260V237H262V237H264V236H266V236H268V236H270V235H272V235H274V234H276V234H278V234H280V233H282V233H284V232H286V232H288V232H290V231H292V231H294V230H296V230H298V230H300V229H302V229H304V229H306V228H308V228H310V228H312V227H314V227H316V227H318V226H320V226H322V226H324V225H326V225H328V225H330V224H332V224H334V224H336V224H338V223H340V223H342V223H344V222H346V222H348V222H350V222H352V222H354V221H356V221H358V221H360V221H362V221H364V220H366V220H368V220H370V220H372V220H374V220H376V220H378V220H380V220H382V219H384V219H386V219H388V219H390V219H392V219H394V219H396V219H398V219H400V219H402V219H404V219H406V219H408V220H410V220H412V220H414V220H416V220H418V220H420V220H422V220H424V221H426V221H428V221H430V221H432V221H434V221H436V222H438V222H440V222H442V222H444V223H446V223H448V223H450V224H452V224H454V224H456V225H458V225H460V225H462V226H464V226H466V226H468V227H470V227H472V228H474V228H476V228H478V229H480V229H482V230H484V230H486V231H488V231H490V232H492V232H494V233H496V233H498V234H500V234H502V235H504V235H506V236H508V236H510V237H512V237H514V238H516V239H518V239H520V240H522V240H524V241H526V242H528V242H530V243H532V243H534V244H536V245H538V245H540V246H542V247H544V247H546V248H548V249H550V249H552V250H554V251H556V251H558V252H560V253H562V253H564V254H566V255H568V256H570V256H572V257H574V258H576V259H578V259H580V260H582V261H584V261H586V262H588V263H590V264H592V264H594V265H596V266H598V267H600V268H602V268H604V269H606V270H608V271H610V271H612V272H614V273H616V274H618V275H620V275H622V276H624V277H626V278H628V279H630V279H632V280H634V281H636V282H638V283H640V284H642V284H644V285H646V286H648V287H650V288H652V288H654V289H656V290H658V291H660V292H662V293H664V294H666V294H668V295H670V296H672V297H674V298H676V299H678V300H680V300H682V301H684V302H686V303H688V304H690V305H692V306H694V307H696V308H698V308H700V309H702V310H704V311H706V312H708V313H710V314H712V315H714V316H716V317H718V318H720V319H722V321H724V322H726V323H728V325H730V328H732V330H734V329H736V329H738V329H740V329H742V329H744V329H746V329H748V329H750V328H752V328H754V328H756V328H758V328H760V328H762V328H764V327H766V327H768V327H770V327H772V323H774V331H772V327H770V327H768V327H766V327H764V328H762V328H760V328H758V328H756V328H754V328H752V328H750V329H748V329H746V329H744V329H742V329H740V329H738V329H736V329H734V330H732V333H730V336H728V338H726V339H724V341H722V342H720V344H718V345H716V346H714V348H712V349H710V350H708V351H706V352H704V353H702V355H700V356H698V357H696V358H694V359H692V360H690V361H688V362H686V363H684V364H682V365H680V366H678V367H676V368H674V369H672V370H670V371H668V372H666V373H664V373H662V374H660V375H658V376H656V377H654V378H652V379H650V379H648V380H646V381H644V382H642V383H640V383H638V384H636V385H634V386H632V386H630V387H628V388H626V388H624V389H622V390H620V391H618V391H616V392H614V393H612V393H610V394H608V394H606V395H604V396H602V396H600V397H598V398H596V398H594V399H592V399H590V400H588V400H586V401H584V402H582V402H580V403H578V403H576V404H574V404H572V405H570V405H568V406H566V406H564V407H562V407H560V408H558V408H556V409H554V409H552V410H550V410H548V411H546V411H544V412H542V412H540V412H538V413H536V413H534V414H532V414H530V415H528V415H526V416H524V416H522V416H520V417H518V417H516V418H514V418H512V419H510V419H508V419H506V420H504V420H502V421H500V421H498V421H496V422H494V422H492V423H490V423H488V423H486V424H484V424H482V424H480V425H478V425H476V426H474V426H472V426H470V427H468V427H466V427H464V428H462V428H460V428H458V429H456V429H454V429H452V430H450V430H448V430H446V431H444V431H442V431H440V431H438V432H436V432H434V432H432V432H430V433H428V433H426V433H424V433H422V434H420V434H418V434H416V434H414V434H412V435H410V435H408V435H406V435H404V435H402V435H400V436H398V436H396V436H394V436H392V436H390V436H388V436H386V436H384V436H382V436H380V436H378V436H376V436H374V436H372V436H370V436H368V436H366V436H364V436H362V436H360V436H358V436H356V436H354V436H352V436H350V436H348V435H346V435H344V435H342V435H340V435H338V435H336V434H334V434H332V434H330V434H328V433H326V433H324V433H322V433H320V432H318V432H316V432H314V431H312V431H310V431H308V430H306V430H304V430H302V429H300V429H298V429H296V428H294V428H292V427H290V427H288V426H286V426H284V425H282V425H280V425H278V424H276V424H274V423H272V423H270V422H268V421H266V421H264V420H262V420H260V419H258V419H256V418H254V418H252V417H250V416H248V416H246V415H244V415H242V414H240V413H238V413H236V412H234V412H232V411H230V410H228V410H226V409H224V408H222V408H220V407H218V406H216V406H214V405H212V404H210V404H208V403H206V402H204V401H202V401H200V400H198V399H196V399H194V398H192V397H190V396H188V396H186V395H184V394H182V393H180V393H178V392H176V391H174V390H172V390H170V389H168V388H166V387H164V387H162V386H160V385H158V384H156V383H154V383H152V382H150V381H148V380H146V379H144V379H142V378H140V377H138V376H136V375H134V375H132V374H130V373H128V372H126V371H124V371H122V370H120V369H118V368H116V367H114V366H112V366H110V365H108V364H106V363H104V362H102V361H100V360H98V360H96V359H94V358H92V357H90V356H88V355H86V354H84V353H82V353H80V352H78V351H76V350H74V349H72V348H70V347H68V346H66V345H64V344H62V343H60V342H58V341H56V340H54V339H52V338H50V337H48V335H46V334H44V332H42Z"/><path fill="#d01810" d="M42 327V327H44V327H46V327H48V326H50V326H52V326H54V326H56V326H58V326H60V326H62V326H64V325H66V325H68V325H70V325H72V325H74V325H76V325H78V325H80V325H82V325H84V324H86V324H88V324H90V324H92V324H94V324H96V324H98V317H100V314H102V311H104V309H106V307H108V305H110V303H112V301H114V300H116V298H118V297H120V296H122V294H124V293H126V292H128V291H130V290H132V289H134V287H136V286H138V285H140V284H142V283H144V282H146V282H148V281H150V280H152V279H154V278H156V277H158V276H160V276H162V275H164V274H166V273H168V272H170V272H172V271H174V270H176V270H178V269H180V268H182V267H184V267H186V266H188V265H190V265H192V264H194V264H196V263H198V262H200V262H202V261H204V261H206V260H208V259H210V259H212V258H214V258H216V257H218V257H220V256H222V256H224V255H226V255H228V254H230V254H232V253H234V253H236V252H238V252H240V251H242V251H244V250H246V250H248V249H250V249H252V248H254V248H256V247H258V247H260V247H262V246H264V246H266V245H268V245H270V244H272V244H274V244H276V243H278V243H280V242H282V242H284V242H286V241H288V241H290V240H292V240H294V240H296V239H298V239H300V239H302V238H304V238H306V238H308V237H310V237H312V237H314V236H316V236H318V236H320V235H322V235H324V235H326V234H328V234H330V234H332V234H334V233H336V233H338V233H340V232H342V232H344V232H346V232H348V232H350V231H352V231H354V231H356V231H358V231H360V230H362V230H364V230H366V230H368V230H370V230H372V230H374V229H376V229H378V229H380V229H382V229H384V229H386V229H388V229H390V229H392V229H394V229H396V229H398V229H400V229H402V229H404V229H406V229H408V229H410V229H412V229H414V229H416V229H418V230H420V230H422V230H424V230H426V230H428V230H430V231H432V231H434V231H436V231H438V231H440V232H442V232H444V232H446V232H448V233H450V233H452V233H454V234H456V234H458V234H460V235H462V235H464V235H466V236H468V236H470V236H472V237H474V237H476V238H478V238H480V239H482V239H484V239H486V240H488V240H490V241H492V241H494V242H496V242H498V243H500V243H502V244H504V244H506V245H508V246H510V246H512V247H514V247H516V248H518V248H520V249H522V250H524V250H526V251H528V252H530V252H532V253H534V254H536V254H538V255H540V256H542V256H544V257H546V258H548V258H550V259H552V260H554V260H556V261H558V262H560V263H562V263H564V264H566V265H568V266H570V266H572V267H574V268H576V269H578V270H580V270H582V271H584V272H586V273H588V274H590V274H592V275H594V276H596V277H598V278H600V279H602V280H604V281H606V281H608V282H610V283H612V284H614V285H616V286H618V287H620V288H622V289H624V290H626V291H628V292H630V293H632V294H634V295H636V296H638V297H640V299H642V300H644V301H646V302H648V303H650V305H652V306H654V307H656V309H658V310H660V312H662V313H664V315H666V317H668V319H670V322H672V325H674V332H676V332H678V332H680V332H682V332H684V332H686V332H688V332H690V332H692V332H694V332H696V332H698V332H700V331H702V331H704V331H706V331H708V331H710V331H712V331H714V331H716V331H718V331H720V330H722V330H724V330H726V330H728V330H730V330H732V330H734V329H736V329H738V329H740V329H742V329H744V329H746V329H748V329H750V328H752V328H754V328H756V328H758V328H760V328H762V328H764V327H766V327H768V327H770V327H772V327H774V327H772V327H770V327H768V327H766V327H764V328H762V328H760V328H758V328H756V328H754V328H752V328H750V329H748V329H746V329H744V329H742V329H740V329H738V329H736V329H734V330H732V330H730V330H728V330H726V330H724V330H722V330H720V331H718V331H716V331H714V331H712V331H710V331H708V331H706V331H704V331H702V331H700V332H698V332H696V332H694V332H692V332H690V332H688V332H686V332H684V332H682V332H680V332H678V332H676V332H674V341H672V344H670V347H668V349H666V351H664V353H662V354H660V356H658V358H656V359H654V360H652V362H650V363H648V364H646V365H644V366H642V368H640V369H638V370H636V371H634V372H632V373H630V374H628V375H626V375H624V376H622V377H620V378H618V379H616V380H614V380H612V381H610V382H608V383H606V384H604V384H602V385H600V386H598V386H596V387H594V388H592V388H590V389H588V390H586V390H584V391H582V392H580V392H578V393H576V393H574V394H572V395H570V395H568V396H566V396H564V397H562V397H560V398H558V399H556V399H554V400H552V400H550V401H548V401H546V402H544V402H542V403H540V403H538V403H536V404H534V404H532V405H530V405H528V406H526V406H524V407H522V407H520V408H518V408H516V408H514V409H512V409H510V410H508V410H506V411H504V411H502V411H500V412H498V412H496V413H494V413H492V413H490V414H488V414H486V414H484V415H482V415H480V416H478V416H476V416H474V417H472V417H470V417H468V418H466V418H464V418H462V419H460V419H458V419H456V420H454V420H452V420H450V420H448V421H446V421H444V421H442V422H440V422H438V422H436V422H434V423H432V423H430V423H428V423H426V424H424V424H422V424H420V424H418V425H416V425H414V425H412V425H410V425H408V425H406V426H404V426H402V426H400V426H398V426H396V426H394V426H392V426H390V427H388V427H386V427H384V427H382V427H380V427H378V427H376V427H374V427H372V427H370V427H368V427H366V427H364V427H362V427H360V427H358V427H356V426H354V426H352V426H350V426H348V426H346V426H344V426H342V426H340V425H338V425H336V425H334V425H332V425H330V424H328V424H326V424H324V424H322V423H320V423H318V423H316V422H314V422H312V422H310V421H308V421H306V421H304V420H302V420H300V420H298V419H296V419H294V418H292V418H290V418H288V417H286V417H284V416H282V416H280V415H278V415H276V414H274V414H272V413H270V413H268V412H266V412H264V411H262V411H260V410H258V410H256V409H254V408H252V408H250V407H248V407H246V406H244V405H242V405H240V404H238V403H236V403H234V402H232V401H230V401H228V400H226V399H224V399H222V398H220V397H218V397H216V396H214V395H212V394H210V394H208V393H206V392H204V391H202V391H200V390H198V389H196V388H194V388H192V387H190V386H188V385H186V384H184V384H182V383H180V382H178V381H176V380H174V379H172V378H170V378H168V377H166V376H164V375H162V374H160V373H158V372H156V371H154V370H152V369H150V368H148V367H146V366H144V365H142V364H140V363H138V362H136V361H134V360H132V359H130V358H128V357H126V355H124V354H122V353H120V351H118V350H116V349H114V347H112V346H110V344H108V342H106V340H104V338H102V335H100V332H98V324H96V324H94V324H92V324H90V324H88V324H86V324H84V325H82V325H80V325H78V325H76V325H74V325H72V325H70V325H68V325H66V325H64V326H62V326H60V326H58V326H56V326H54V326H52V326H50V326H48V327H46V327H44V327H42Z"/><path fill="#ff80c0" d="M42 327V327H44V327H46V327H48V326H50V326H52V326H54V326H56V326H58V326H60V326H62V326H64V325H66V325H68V325H70V325H72V325H74V325H76V325H78V325H80V325H82V325H84V324H86V324H88V324H90V324H92V324H94V324H96V324H98V324H100V324H102V324H104V324H106V324H108V324H110V324H112V324H114V324H116V324H118V324H120V324H122V324H124V324H126V324H128V324H130V318H132V314H134V311H136V308H138V306H140V304H142V302H144V300H146V299H148V297H150V296H152V295H154V293H156V292H158V291H160V290H162V289H164V288H166V287H168V286H170V285H172V284H174V283H176V282H178V281H180V280H182V279H184V278H186V278H188V277H190V276H192V275H194V275H196V274H198V273H200V273H202V272H204V271H206V271H208V270H210V269H212V269H214V268H216V267H218V267H220V266H222V266H224V265H226V264H228V264H230V263H232V263H234V262H236V262H238V261H240V261H242V260H244V260H246V259H248V259H250V258H252V258H254V257H256V257H258V256H260V256H262V255H264V255H266V255H268V254H270V254H272V253H274V253H276V252H278V252H280V252H282V251H284V251H286V250H288V250H290V250H292V249H294V249H296V249H298V248H300V248H302V247H304V247H306V247H308V246H310V246H312V246H314V245H316V245H318V245H320V245H322V244H324V244H326V244H328V243H330V243H332V243H334V243H336V242H338V242H340V242H342V242H344V241H346V241H348V241H350V241H352V240H354V240H356V240H358V240H360V240H362V240H364V239H366V239H368V239H370V239H372V239H374V239H376V239H378V239H380V239H382V238H384V238H386V238H388V238H390V238H392V238H394V238H396V238H398V238H400V238H402V238H404V238H406V238H408V238H410V239H412V239H414V239H416V239H418V239H420V239H422V239H424V239H426V239H428V240H430V240H432V240H434V240H436V240H438V241H440V241H442V241H444V241H446V242H448V242H450V242H452V242H454V243H456V243H458V243H460V244H462V244H464V245H466V245H468V245H470V246H472V246H474V246H476V247H478V247H480V248H482V248H484V249H486V249H488V250H490V250H492V251H494V251H496V252H498V252H500V253H502V253H504V254H506V254H508V255H510V256H512V256H514V257H516V257H518V258H520V259H522V259H524V260H526V261H528V261H530V262H532V263H534V263H536V264H538V265H540V265H542V266H544V267H546V268H548V268H550V269H552V270H554V271H556V271H558V272H560V273H562V274H564V275H566V276H568V276H570V277H572V278H574V279H576V280H578V281H580V282H582V283H584V284H586V285H588V286H590V287H592V288H594V289H596V290H598V291H600V292H602V293H604V294H606V295H608V296H610V298H612V299H614V300H616V302H618V303H620V304H622V306H624V307H626V309H628V311H630V313H632V315H634V317H636V320H638V323H640V328H642V333H644V333H646V333H648V333H650V333H652V333H654V333H656V333H658V333H660V333H662V333H664V333H666V333H668V332H670V332H672V332H674V332H676V332H678V332H680V332H682V332H684V332H686V332H688V332H690V332H692V332H694V332H696V332H698V332H700V331H702V331H704V331H706V331H708V331H710V331H712V331H714V331H716V331H718V331H720V330H722V330H724V330H726V330H728V330H730V330H732V330H734V329H736V329H738V329H740V329H742V329H744V329H746V329H748V329H750V328H752V328H754V328H756V328H758V328H760V328H762V328H764V327H766V327H768V327H770V327H772V327H774V327H772V327H770V327H768V327H766V327H764V328H762V328H760V328H758V328H756V328H754V328H752V328H750V329H748V329H746V329H744V329H742V329H740V329H738V329H736V329H734V330H732V330H730V330H728V330H726V330H724V330H722V330H720V331H718V331H716V331H714V331H712V331H710V331H708V331H706V331H704V331H702V331H700V332H698V332H696V332H694V332H692V332H690V332H688V332H686V332H684V332H682V332H680V332H678V332H676V332H674V332H672V332H670V332H668V333H666V333H664V333H662V333H660V333H658V333H656V333H654V333H652V333H650V333H648V333H646V333H644V333H642V338H640V343H638V346H636V349H634V351H632V353H630V355H628V357H626V358H624V360H622V361H620V362H618V363H616V365H614V366H612V367H610V368H608V369H606V370H604V371H602V372H600V373H598V374H596V375H594V376H592V376H590V377H588V378H586V379H584V380H582V380H580V381H578V382H576V382H574V383H572V384H570V384H568V385H566V386H564V386H562V387H560V388H558V388H556V389H554V389H552V390H550V391H548V391H546V392H544V392H542V393H540V393H538V394H536V394H534V395H532V395H530V396H528V396H526V397H524V397H522V398H520V398H518V399H516V399H514V399H512V400H510V400H508V401H506V401H504V402H502V402H500V402H498V403H496V403H494V404H492V404H490V404H488V405H486V405H484V406H482V406H480V406H478V407H476V407H474V407H472V408H470V408H468V408H466V409H464V409H462V409H460V410H458V410H456V410H454V411H452V411H450V411H448V412H446V412H444V412H442V412H440V413H438V413H436V413H434V413H432V414H430V414H428V414H426V414H424V415H422V415H420V415H418V415H416V415H414V416H412V416H410V416H408V416H406V416H404V416H402V417H400V417H398V417H396V417H394V417H392V417H390V417H388V417H386V417H384V417H382V417H380V417H378V417H376V417H374V417H372V417H370V417H368V417H366V417H364V417H362V417H360V417H358V417H356V417H354V417H352V417H350V417H348V417H346V417H344V416H342V416H340V416H338V416H336V416H334V415H332V415H330V415H328V415H326V415H324V414H322V414H320V414H318V413H316V413H314V413H312V413H310V412H308V412H306V412H304V411H302V411H300V410H298V410H296V410H294V409H292V409H290V408H288V408H286V407H284V407H282V407H280V406H278V406H276V405H274V405H272V404H270V403H268V403H266V402H264V402H262V401H260V401H258V400H256V400H254V399H252V398H250V398H248V397H246V396H244V396H242V395H240V394H238V394H236V393H234V392H232V392H230V391H228V390H226V389H224V389H222V388H220V387H218V386H216V386H214V385H212V384H210V383H208V382H206V382H204V381H202V380H200V379H198V378H196V377H194V376H192V375H190V375H188V374H186V373H184V372H182V371H180V370H178V369H176V368H174V367H172V365H170V364H168V363H166V362H164V361H162V360H160V358H158V357H156V356H154V355H152V353H150V352H148V350H146V348H144V347H142V345H140V343H138V341H136V338H134V335H132V330H130V324H128V324H126V324H124V324H122V324H120V324H118V324H116V324H114V324H112V324H110V324H108V324H106V324H104V324H102V324H100V324H98V324H96V324H94V324H92V324H90V324H88V324H86V324H84V325H82V325H80V325H78V325H76V325H74V325H72V325H70V325H68V325H66V325H64V326H62V326H60V326H58V326H56V326H54V326H52V326H50V326H48V327H46V327H44V327H42Z"/><path fill="#80ffff" d="M42 327V327H44V327H46V327H48V326H50V326H52V326H54V326H56V326H58V326H60V326H62V326H64V325H66V325H68V325H70V325H72V325H74V325H76V325H78V325H80V325H82V325H84V324H86V324H88V324H90V324H92V324H94V324H96V324H98V324H100V324H102V324H104V324H106V324H108V324H110V324H112V324H114V324H116V324H118V324H120V324H122V324H124V324H126V324H128V324H130V324H132V324H134V324H136V324H138V324H140V324H142V324H144V324H146V324H148V324H150V324H152V324H154V324H156V324H158V318H160V314H162V311H164V308H166V306H168V304H170V302H172V301H174V299H176V298H178V296H180V295H182V294H184V293H186V292H188V291H190V289H192V288H194V287H196V287H198V286H200V285H202V284H204V283H206V282H208V281H210V281H212V280H214V279H216V278H218V278H220V277H222V276H224V276H226V275H228V274H230V274H232V273H234V273H236V272H238V271H240V271H242V270H244V270H246V269H248V269H250V268H252V268H254V267H256V267H258V266H260V266H262V265H264V265H266V264H268V264H270V263H272V263H274V262H276V262H278V261H280V261H282V261H284V260H286V260H288V259H290V259H292V259H294V258H296V258H298V257H300V257H302V257H304V256H306V256H308V256H310V255H312V255H314V255H316V254H318V254H320V254H322V253H324V253H326V253H328V253H330V252H332V252H334V252H336V252H338V251H340V251H342V251H344V251H346V250H348V250H350V250H352V250H354V250H356V249H358V249H360V249H362V249H364V249H366V249H368V248H370V248H372V248H374V248H376V248H378V248H380V248H382V248H384V248H386V248H388V248H390V248H392V247H394V247H396V247H398V247H400V247H402V248H404V248H406V248H408V248H410V248H412V248H414V248H416V248H418V248H420V248H422V248H424V249H426V249H428V249H430V249H432V249H434V249H436V250H438V250H440V250H442V250H444V251H446V251H448V251H450V251H452V252H454V252H456V252H458V253H460V253H462V253H464V254H466V254H468V255H470V255H472V255H474V256H476V256H478V257H480V257H482V258H484V258H486V259H488V259H490V260H492V260H494V261H496V261H498V262H500V262H502V263H504V263H506V264H508V265H510V265H512V266H514V266H516V267H518V268H520V268H522V269H524V270H526V271H528V271H530V272H532V273H534V274H536V274H538V275H540V276H542V277H544V277H546V278H548V279H550V280H552V281H554V282H556V283H558V284H560V285H562V286H564V287H566V288H568V289H570V290H572V291H574V292H576V293H578V294H580V295H582V296H584V298H586V299H588V300H590V302H592V303H594V305H596V306H598V308H600V310H602V312H604V314H606V316H608V319H610V322H612V327H614V332H616V332H618V332H620V332H622V332H624V332H626V332H628V332H630V332H632V332H634V332H636V332H638V333H640V333H642V333H644V333H646V333H648V333H650V333H652V333H654V333H656V333H658V333H660V333H662V333H664V333H666V333H668V332H670V332H672V332H674V332H676V332H678V332H680V332H682V332H684V332H686V332H688V332H690V332H692V332H694V332H696V332H698V332H700V331H702V331H704V331H706V331H708V331H710V331H712V331H714V331H716V331H718V331H720V330H722V330H724V330H726V330H728V330H730V330H732V330H734V329H736V329H738V329H740V329H742V329H744V329H746V329H748V329H750V328H752V328H754V328H756V328H758V328H760V328H762V328H764V327H766V327H768V327H770V327H772V327H774V327H772V327H770V327H768V327H766V327H764V328H762V328H760V328H758V328H756V328H754V328H752V328H750V329H748V329H746V329H744V329H742V329H740V329H738V329H736V329H734V330H732V330H730V330H728V330H726V330H724V330H722V330H720V331H718V331H716V331H714V331H712V331H710V331H708V331H706V331H704V331H702V331H700V332H698V332H696V332H694V332H692V332H690V332H688V332H686V332H684V332H682V332H680V332H678V332H676V332H674V332H672V332H670V332H668V333H666V333H664V333H662V333H660V333H658V333H656V333H654V333H652V333H650V333H648V333H646V333H644V333H642V333H640V333H638V332H636V332H634V332H632V332H630V332H628V332H626V332H624V332H622V332H620V332H618V332H616V332H614V337H612V342H610V346H608V348H606V350H604V352H602V354H600V356H598V357H596V359H594V360H592V361H590V362H588V364H586V365H584V366H582V367H580V368H578V369H576V370H574V371H572V371H570V372H568V373H566V374H564V375H562V375H560V376H558V377H556V378H554V378H552V379H550V380H548V380H546V381H544V382H542V382H540V383H538V383H536V384H534V385H532V385H530V386H528V386H526V387H524V387H522V388H520V388H518V389H516V389H514V390H512V390H510V391H508V391H506V392H504V392H502V392H500V393H498V393H496V394H494V394H492V395H490V395H488V395H486V396H484V396H482V397H480V397H478V397H476V398H474V398H472V398H470V399H468V399H466V399H464V400H462V400H460V400H458V401H456V401H454V401H452V402H450V402H448V402H446V403H444V403H442V403H440V403H438V404H436V404H434V404H432V404H430V405H428V405H426V405H424V405H422V406H420V406H418V406H416V406H414V406H412V407H410V407H408V407H406V407H404V407H402V407H400V407H398V408H396V408H394V408H392V408H390V408H388V408H386V408H384V408H382V408H380V408H378V408H376V408H374V408H372V408H370V408H368V408H366V408H364V408H362V408H360V408H358V408H356V408H354V408H352V408H350V408H348V407H346V407H344V407H342V407H340V407H338V407H336V406H334V406H332V406H330V406H328V406H326V405H324V405H322V405H320V405H318V404H316V404H314V404H312V403H310V403H308V403H306V402H304V402H302V402H300V401H298V401H296V400H294V400H292V399H290V399H288V399H286V398H284V398H282V397H280V397H278V396H276V396H274V395H272V395H270V394H268V393H266V393H264V392H262V392H260V391H258V390H256V390H254V389H252V388H250V388H248V387H246V386H244V386H242V385H240V384H238V384H236V383H234V382H232V381H230V380H228V380H226V379H224V378H222V377H220V376H218V375H216V374H214V374H212V373H210V372H208V371H206V370H204V369H202V368H200V367H198V366H196V364H194V363H192V362H190V361H188V360H186V358H184V357H182V356H180V354H178V353H176V351H174V350H172V348H170V346H168V344H166V342H164V339H162V336H160V331H158V324H156V324H154V324H152V324H150V324H148V324H146V324H144V324H142V324H140V324H138V324H136V324H134V324H132V324H130V324H128V324H126V324H124V324H122V324H120V324H118V324H116V324H114V324H112V324H110V324H108V324H106V324H104V324H102V324H100V324H98V324H96V324H94V324H92V324H90V324H88V324H86V324H84V325H82V325H80V325H78V325H76V325H74V325H72V325H70V325H68V325H66V325H64V326H62V326H60V326H58V326H56V326H54V326H52V326H50V326H48V327H46V327H44V327H42Z"/><path fill="#000" d="M42 224h2v3h-2zM42 428h2v3h-2zM44 224h2v3h-2zM44 428h2v3h-2zM46 224h2v3h-2zM46 428h2v3h-2zM48 223h2v3h-2zM48 428h2v3h-2zM50 223h2v3h-2zM50 428h2v3h-2zM52 223h2v3h-2zM52 428h2v3h-2zM54 222h2v3h-2zM54 428h2v3h-2zM56 222h2v3h-2zM56 428h2v3h-2zM58 222h2v3h-2zM58 428h2v3h-2zM60 221h2v3h-2zM60 428h2v3h-2zM62 221h2v3h-2zM62 428h2v3h-2zM64 221h2v3h-2zM64 428h2v3h-2zM66 220h2v3h-2zM66 428h2v3h-2zM68 220h2v3h-2zM68 428h2v3h-2zM70 220h2v3h-2zM70 429h2v3h-2zM72 219h2v3h-2zM72 429h2v3h-2zM74 219h2v3h-2zM74 429h2v3h-2zM76 218h2v3h-2zM76 429h2v3h-2zM78 218h2v3h-2zM78 429h2v3h-2zM80 218h2v3h-2zM80 430h2v3h-2zM82 217h2v3h-2zM82 430h2v3h-2zM84 217h2v3h-2zM84 430h2v3h-2zM86 216h2v3h-2zM86 430h2v3h-2zM88 216h2v3h-2zM88 431h2v3h-2zM90 216h2v3h-2zM90 431h2v3h-2zM92 215h2v3h-2zM92 431h2v3h-2zM94 215h2v3h-2zM94 431h2v3h-2zM96 214h2v3h-2zM96 432h2v3h-2zM98 214h2v3h-2zM98 432h2v3h-2zM100 214h2v3h-2zM100 432h2v3h-2zM102 213h2v3h-2zM102 433h2v3h-2zM104 213h2v3h-2zM104 433h2v3h-2zM106 212h2v3h-2zM106 434h2v3h-2zM108 212h2v3h-2zM108 434h2v3h-2zM110 211h2v3h-2zM110 434h2v3h-2zM112 211h2v3h-2zM112 435h2v3h-2zM114 210h2v3h-2zM114 435h2v3h-2zM116 210h2v3h-2zM116 436h2v3h-2zM118 209h2v3h-2zM118 436h2v3h-2zM120 209h2v3h-2zM120 436h2v3h-2zM122 209h2v3h-2zM122 437h2v3h-2zM124 208h2v3h-2zM124 437h2v3h-2zM126 208h2v3h-2zM126 438h2v3h-2zM128 207h2v3h-2zM128 438h2v3h-2zM130 207h2v3h-2zM130 439h2v3h-2zM132 206h2v3h-2zM132 439h2v3h-2zM134 206h2v3h-2zM134 440h2v3h-2zM136 205h2v3h-2zM136 440h2v3h-2zM138 205h2v3h-2zM138 441h2v3h-2zM140 204h2v3h-2zM140 441h2v3h-2zM142 204h2v3h-2zM142 442h2v3h-2zM144 203h2v3h-2zM144 442h2v3h-2zM146 203h2v3h-2zM146 443h2v3h-2zM148 202h2v3h-2zM148 444h2v3h-2zM150 202h2v3h-2zM150 444h2v3h-2zM152 201h2v3h-2zM152 445h2v3h-2zM154 201h2v3h-2zM154 445h2v3h-2zM156 200h2v3h-2zM156 446h2v3h-2zM158 200h2v3h-2zM158 447h2v3h-2zM160 199h2v3h-2zM160 447h2v3h-2zM162 199h2v3h-2zM162 448h2v3h-2zM164 198h2v3h-2zM164 448h2v3h-2zM166 198h2v3h-2zM166 449h2v3h-2zM168 197h2v3h-2zM168 450h2v3h-2zM170 197h2v3h-2zM170 450h2v3h-2zM172 196h2v3h-2zM172 451h2v3h-2zM174 196h2v3h-2zM174 452h2v3h-2zM176 195h2v3h-2zM176 452h2v3h-2zM178 194h2v3h-2zM178 453h2v3h-2zM180 194h2v3h-2zM180 454h2v3h-2zM182 193h2v3h-2zM182 454h2v3h-2zM184 193h2v3h-2zM184 455h2v3h-2zM186 192h2v3h-2zM186 456h2v3h-2zM188 192h2v3h-2zM188 457h2v3h-2zM190 191h2v3h-2zM190 457h2v3h-2zM192 191h2v3h-2zM192 458h2v3h-2zM194 190h2v3h-2zM194 459h2v3h-2zM196 189h2v3h-2zM196 459h2v3h-2zM198 189h2v3h-2zM198 460h2v3h-2zM200 188h2v3h-2zM200 461h2v3h-2zM202 188h2v3h-2zM202 462h2v3h-2zM204 187h2v3h-2zM204 462h2v3h-2zM206 187h2v3h-2zM206 463h2v3h-2zM208 186h2v3h-2zM208 464h2v3h-2zM210 185h2v3h-2zM210 465h2v3h-2zM212 185h2v3h-2zM212 466h2v3h-2zM214 184h2v3h-2zM214 466h2v3h-2zM216 183h2v3h-2zM216 467h2v3h-2zM218 183h2v3h-2zM218 468h2v3h-2zM220 182h2v3h-2zM220 469h2v3h-2zM222 182h2v3h-2zM222 470h2v3h-2zM224 181h2v3h-2zM224 470h2v3h-2zM226 180h2v3h-2zM226 471h2v3h-2zM228 180h2v3h-2zM228 472h2v3h-2zM230 179h2v3h-2zM230 473h2v3h-2zM232 178h2v3h-2zM232 474h2v3h-2zM234 177h2v3h-2zM234 474h2v3h-2zM236 177h2v3h-2zM236 475h2v3h-2zM238 176h2v3h-2zM238 476h2v3h-2zM240 175h2v3h-2zM240 477h2v3h-2zM242 175h2v3h-2zM242 478h2v3h-2zM244 174h2v3h-2zM244 479h2v3h-2zM246 173h2v3h-2zM246 480h2v3h-2zM248 172h2v3h-2zM248 481h2v3h-2zM250 172h2v3h-2zM250 481h2v3h-2zM252 171h2v3h-2zM252 482h2v3h-2zM254 170h2v3h-2zM254 483h2v3h-2zM256 169h2v3h-2zM256 484h2v3h-2zM258 168h2v3h-2zM258 485h2v3h-2zM260 168h2v3h-2zM260 486h2v3h-2zM262 167h2v3h-2zM262 487h2v3h-2zM264 166h2v3h-2zM264 488h2v3h-2zM266 165h2v3h-2zM266 489h2v3h-2zM268 164h2v3h-2zM268 490h2v3h-2zM270 163h2v3h-2zM270 491h2v3h-2zM272 162h2v3h-2zM272 492h2v3h-2zM274 161h2v3h-2zM274 493h2v3h-2zM276 160h2v3h-2zM276 494h2v3h-2zM278 159h2v3h-2zM280 158h2v3h-2zM488 494h2v3h-2zM490 158h2v3h-2zM490 494h2v3h-2zM492 159h2v3h-2zM492 493h2v3h-2zM494 160h2v3h-2zM494 492h2v3h-2zM496 161h2v3h-2zM496 491h2v3h-2zM498 162h2v3h-2zM498 490h2v3h-2zM500 163h2v3h-2zM500 489h2v3h-2zM502 164h2v3h-2zM502 488h2v3h-2zM504 165h2v3h-2zM504 487h2v3h-2zM506 166h2v3h-2zM506 486h2v3h-2zM508 167h2v3h-2zM508 486h2v3h-2zM510 168h2v3h-2zM510 485h2v3h-2zM512 169h2v3h-2zM512 484h2v3h-2zM514 170h2v3h-2zM514 483h2v3h-2zM516 171h2v3h-2zM516 482h2v3h-2zM518 172h2v3h-2zM518 482h2v3h-2zM520 173h2v3h-2zM520 481h2v3h-2zM522 174h2v3h-2zM522 480h2v3h-2zM524 174h2v3h-2zM524 480h2v3h-2zM526 175h2v3h-2zM526 479h2v3h-2zM528 176h2v3h-2zM528 478h2v3h-2zM530 177h2v3h-2zM530 477h2v3h-2zM532 178h2v3h-2zM532 477h2v3h-2zM534 179h2v3h-2zM534 476h2v3h-2zM536 180h2v3h-2zM536 475h2v3h-2zM538 180h2v3h-2zM538 475h2v3h-2zM540 181h2v3h-2zM540 474h2v3h-2zM542 182h2v3h-2zM542 473h2v3h-2zM544 183h2v3h-2zM544 473h2v3h-2zM546 184h2v3h-2zM546 472h2v3h-2zM548 185h2v3h-2zM548 472h2v3h-2zM550 185h2v3h-2zM550 471h2v3h-2zM552 186h2v3h-2zM552 470h2v3h-2zM554 187h2v3h-2zM554 470h2v3h-2zM556 188h2v3h-2zM556 469h2v3h-2zM558 189h2v3h-2zM558 469h2v3h-2zM560 189h2v3h-2zM560 468h2v3h-2zM562 190h2v3h-2zM562 467h2v3h-2zM564 191h2v3h-2zM564 467h2v3h-2zM566 192h2v3h-2zM566 466h2v3h-2zM568 192h2v3h-2zM568 466h2v3h-2zM570 193h2v3h-2zM570 465h2v3h-2zM572 194h2v3h-2zM572 465h2v3h-2zM574 195h2v3h-2zM574 464h2v3h-2zM576 195h2v3h-2zM576 463h2v3h-2zM578 196h2v3h-2zM578 463h2v3h-2zM580 197h2v3h-2zM580 462h2v3h-2zM582 198h2v3h-2zM582 462h2v3h-2zM584 198h2v3h-2zM584 461h2v3h-2zM586 199h2v3h-2zM586 461h2v3h-2zM588 200h2v3h-2zM588 460h2v3h-2zM590 200h2v3h-2zM590 460h2v3h-2zM592 201h2v3h-2zM592 459h2v3h-2zM594 202h2v3h-2zM594 459h2v3h-2zM596 202h2v3h-2zM596 458h2v3h-2zM598 203h2v3h-2zM598 458h2v3h-2zM600 204h2v3h-2zM600 457h2v3h-2zM602 204h2v3h-2zM602 457h2v3h-2zM604 205h2v3h-2zM604 456h2v3h-2zM606 206h2v3h-2zM606 456h2v3h-2zM608 206h2v3h-2zM608 455h2v3h-2zM610 207h2v3h-2zM610 455h2v3h-2zM612 208h2v3h-2zM612 454h2v3h-2zM614 208h2v3h-2zM614 454h2v3h-2zM616 209h2v3h-2zM616 453h2v3h-2zM618 209h2v3h-2zM618 453h2v3h-2zM620 210h2v3h-2zM620 452h2v3h-2zM622 211h2v3h-2zM622 452h2v3h-2zM624 211h2v3h-2zM624 451h2v3h-2zM626 212h2v3h-2zM626 451h2v3h-2zM628 212h2v3h-2zM628 450h2v3h-2zM630 213h2v3h-2zM630 450h2v3h-2zM632 213h2v3h-2zM632 449h2v3h-2zM634 214h2v3h-2zM634 449h2v3h-2zM636 215h2v3h-2zM636 449h2v3h-2zM638 215h2v3h-2zM638 448h2v3h-2zM640 216h2v3h-2zM640 448h2v3h-2zM642 216h2v3h-2zM642 447h2v3h-2zM644 217h2v3h-2zM644 447h2v3h-2zM646 217h2v3h-2zM646 446h2v3h-2zM648 217h2v3h-2zM648 446h2v3h-2zM650 218h2v3h-2zM650 445h2v3h-2zM652 218h2v3h-2zM652 445h2v3h-2zM654 219h2v3h-2zM654 444h2v3h-2zM656 219h2v3h-2zM656 444h2v3h-2zM658 220h2v3h-2zM658 444h2v3h-2zM660 220h2v3h-2zM660 443h2v3h-2zM662 220h2v3h-2zM662 443h2v3h-2zM664 221h2v3h-2zM664 442h2v3h-2zM666 221h2v3h-2zM666 442h2v3h-2zM668 222h2v3h-2zM668 441h2v3h-2zM670 222h2v3h-2zM670 441h2v3h-2zM672 222h2v3h-2zM672 441h2v3h-2zM674 223h2v3h-2zM674 440h2v3h-2zM676 223h2v3h-2zM676 440h2v3h-2zM678 223h2v3h-2zM678 439h2v3h-2zM680 224h2v3h-2zM680 439h2v3h-2zM682 224h2v3h-2zM682 439h2v3h-2zM684 224h2v3h-2zM684 438h2v3h-2zM686 224h2v3h-2zM686 438h2v3h-2zM688 225h2v3h-2zM688 437h2v3h-2zM690 225h2v3h-2zM690 437h2v3h-2zM692 225h2v3h-2zM692 437h2v3h-2zM694 225h2v3h-2zM694 436h2v3h-2zM696 226h2v3h-2zM696 436h2v3h-2zM698 226h2v3h-2zM698 435h2v3h-2zM700 226h2v3h-2zM700 435h2v3h-2zM702 226h2v3h-2zM702 435h2v3h-2zM704 226h2v3h-2zM704 434h2v3h-2zM706 226h2v3h-2zM706 434h2v3h-2zM708 227h2v3h-2zM708 434h2v3h-2zM710 227h2v3h-2zM710 433h2v3h-2zM712 227h2v3h-2zM712 433h2v3h-2zM714 227h2v3h-2zM714 433h2v3h-2zM716 227h2v3h-2zM716 432h2v3h-2zM718 227h2v3h-2zM718 432h2v3h-2zM720 227h2v3h-2zM720 432h2v3h-2zM722 227h2v3h-2zM722 431h2v3h-2zM724 227h2v3h-2zM724 431h2v3h-2zM726 227h2v3h-2zM726 431h2v3h-2zM728 227h2v3h-2zM728 431h2v3h-2zM730 227h2v3h-2zM730 430h2v3h-2zM732 227h2v3h-2zM732 430h2v3h-2zM734 227h2v3h-2zM734 430h2v3h-2zM736 227h2v3h-2zM736 430h2v3h-2zM738 227h2v3h-2zM738 430h2v3h-2zM740 227h2v3h-2zM740 429h2v3h-2zM742 227h2v3h-2zM742 429h2v3h-2zM744 227h2v3h-2zM744 429h2v3h-2zM746 227h2v3h-2zM746 429h2v3h-2zM748 226h2v3h-2zM748 429h2v3h-2zM750 226h2v3h-2zM750 428h2v3h-2zM752 226h2v3h-2zM752 428h2v3h-2zM754 226h2v3h-2zM754 428h2v3h-2zM756 226h2v3h-2zM756 428h2v3h-2zM758 226h2v3h-2zM758 428h2v3h-2zM760 225h2v3h-2zM760 428h2v3h-2zM762 225h2v3h-2zM762 428h2v3h-2zM764 225h2v3h-2zM764 428h2v3h-2zM766 225h2v3h-2zM766 428h2v3h-2zM768 225h2v3h-2zM768 428h2v3h-2zM770 224h2v3h-2zM770 428h2v3h-2zM772 224h2v3h-2zM772 428h2v3h-2z"/><path fill="#000" d="M43 393h1v1h-1zM42 259h2v2h-2zM42 394h2v1h-2zM45 393h1v1h-1zM44 259h2v2h-2zM44 394h2v1h-2zM47 394h1v1h-1zM46 259h2v2h-2zM46 395h2v1h-2zM49 394h1v1h-1zM48 258h2v2h-2zM48 395h2v1h-2zM51 394h1v1h-1zM50 258h2v2h-2zM50 395h2v1h-2zM53 394h1v1h-1zM52 257h2v2h-2zM52 395h2v1h-2zM55 394h1v1h-1zM54 257h2v2h-2zM54 395h2v1h-2zM57 394h1v1h-1zM56 257h2v2h-2zM56 395h2v1h-2zM59 394h1v1h-1zM58 256h2v2h-2zM58 395h2v1h-2zM61 394h1v1h-1zM60 256h2v2h-2zM60 395h2v1h-2zM63 395h1v1h-1zM62 255h2v2h-2zM62 396h2v1h-2zM65 395h1v1h-1zM64 255h2v2h-2zM64 396h2v1h-2zM67 395h1v1h-1zM66 255h2v2h-2zM66 396h2v1h-2zM69 395h1v1h-1zM68 254h2v2h-2zM68 396h2v1h-2zM71 395h1v1h-1zM70 254h2v2h-2zM70 396h2v1h-2zM73 396h1v1h-1zM72 253h2v2h-2zM72 397h2v1h-2zM75 396h1v1h-1zM74 253h2v2h-2zM74 397h2v1h-2zM77 396h1v1h-1zM76 252h2v2h-2zM76 397h2v1h-2zM79 397h1v1h-1zM78 252h2v2h-2zM78 398h2v1h-2zM81 397h1v1h-1zM80 251h2v2h-2zM80 398h2v1h-2zM83 397h1v1h-1zM82 251h2v2h-2zM82 398h2v1h-2zM85 398h1v1h-1zM84 250h2v2h-2zM84 399h2v1h-2zM87 398h1v1h-1zM86 250h2v2h-2zM86 399h2v1h-2zM89 398h1v1h-1zM88 249h2v2h-2zM88 399h2v1h-2zM91 399h1v1h-1zM90 249h2v2h-2zM90 400h2v1h-2zM93 399h1v1h-1zM92 248h2v2h-2zM92 400h2v1h-2zM95 399h1v1h-1zM94 248h2v2h-2zM94 400h2v1h-2zM97 400h1v1h-1zM96 247h2v2h-2zM96 401h2v1h-2zM99 400h1v1h-1zM98 247h2v2h-2zM98 401h2v1h-2zM101 401h1v1h-1zM100 246h2v2h-2zM100 402h2v1h-2zM103 401h1v1h-1zM102 246h2v2h-2zM102 402h2v1h-2zM105 402h1v1h-1zM104 245h2v2h-2zM104 403h2v1h-2zM107 402h1v1h-1zM106 245h2v2h-2zM106 403h2v1h-2zM109 402h1v1h-1zM108 244h2v2h-2zM108 403h2v1h-2zM111 403h1v1h-1zM110 244h2v2h-2zM110 404h2v1h-2zM113 403h1v1h-1zM112 243h2v2h-2zM112 404h2v1h-2zM115 404h1v1h-1zM114 243h2v2h-2zM114 405h2v1h-2zM117 404h1v1h-1zM116 242h2v2h-2zM116 405h2v1h-2zM119 405h1v1h-1zM118 242h2v2h-2zM118 406h2v1h-2zM121 405h1v1h-1zM120 241h2v2h-2zM120 406h2v1h-2zM123 406h1v1h-1zM122 241h2v2h-2zM122 407h2v1h-2zM125 406h1v1h-1zM124 240h2v2h-2zM124 407h2v1h-2zM127 407h1v1h-1zM126 239h2v2h-2zM126 408h2v1h-2zM129 408h1v1h-1zM128 239h2v2h-2zM128 409h2v1h-2zM131 408h1v1h-1zM130 238h2v2h-2zM130 409h2v1h-2zM133 409h1v1h-1zM132 238h2v2h-2zM132 410h2v1h-2zM135 409h1v1h-1zM134 237h2v2h-2zM134 410h2v1h-2zM137 410h1v1h-1zM136 237h2v2h-2zM136 411h2v1h-2zM139 410h1v1h-1zM138 236h2v2h-2zM138 411h2v1h-2zM141 411h1v1h-1zM140 236h2v2h-2zM140 412h2v1h-2zM143 411h1v1h-1zM142 235h2v2h-2zM142 412h2v1h-2zM145 412h1v1h-1zM144 235h2v2h-2zM144 413h2v1h-2zM147 413h1v1h-1zM146 234h2v2h-2zM146 414h2v1h-2zM149 413h1v1h-1zM148 234h2v2h-2zM148 414h2v1h-2zM151 414h1v1h-1zM150 233h2v2h-2zM150 415h2v1h-2zM153 414h1v1h-1zM152 233h2v2h-2zM152 415h2v1h-2zM155 415h1v1h-1zM154 232h2v2h-2zM154 416h2v1h-2zM157 416h1v1h-1zM156 232h2v2h-2zM156 417h2v1h-2zM159 416h1v1h-1zM158 231h2v2h-2zM158 417h2v1h-2zM161 417h1v1h-1zM160 231h2v2h-2zM160 418h2v1h-2zM163 418h1v1h-1zM162 230h2v2h-2zM162 419h2v1h-2zM165 418h1v1h-1zM164 230h2v2h-2zM164 419h2v1h-2zM167 419h1v1h-1zM166 229h2v2h-2zM166 420h2v1h-2zM169 419h1v1h-1zM168 229h2v2h-2zM168 420h2v1h-2zM171 420h1v1h-1zM170 228h2v2h-2zM170 421h2v1h-2zM173 421h1v1h-1zM172 228h2v2h-2zM172 422h2v1h-2zM175 421h1v1h-1zM174 227h2v2h-2zM174 422h2v1h-2zM177 422h1v1h-1zM176 227h2v2h-2zM176 423h2v1h-2zM179 423h1v1h-1zM178 226h2v2h-2zM178 424h2v1h-2zM181 423h1v1h-1zM180 226h2v2h-2zM180 424h2v1h-2zM183 424h1v1h-1zM182 225h2v2h-2zM182 425h2v1h-2zM185 425h1v1h-1zM184 225h2v2h-2zM184 426h2v1h-2zM187 425h1v1h-1zM186 224h2v2h-2zM186 426h2v1h-2zM189 426h1v1h-1zM188 224h2v2h-2zM188 427h2v1h-2zM191 427h1v1h-1zM190 223h2v2h-2zM190 428h2v1h-2zM193 427h1v1h-1zM192 223h2v2h-2zM192 428h2v1h-2zM195 428h1v1h-1zM194 222h2v2h-2zM194 429h2v1h-2zM197 428h1v1h-1zM196 222h2v2h-2zM196 429h2v1h-2zM199 429h1v1h-1zM198 221h2v2h-2zM198 430h2v1h-2zM201 430h1v1h-1zM200 221h2v2h-2zM200 431h2v1h-2zM203 430h1v1h-1zM202 220h2v2h-2zM202 431h2v1h-2zM205 431h1v1h-1zM204 220h2v2h-2zM204 432h2v1h-2zM207 432h1v1h-1zM206 219h2v2h-2zM206 433h2v1h-2zM209 432h1v1h-1zM208 219h2v2h-2zM208 433h2v1h-2zM211 433h1v1h-1zM210 218h2v2h-2zM210 434h2v1h-2zM213 434h1v1h-1zM212 218h2v2h-2zM212 435h2v1h-2zM215 434h1v1h-1zM214 217h2v2h-2zM214 435h2v1h-2zM217 435h1v1h-1zM216 217h2v2h-2zM216 436h2v1h-2zM219 436h1v1h-1zM218 216h2v2h-2zM218 437h2v1h-2zM221 436h1v1h-1zM220 216h2v2h-2zM220 437h2v1h-2zM223 437h1v1h-1zM222 215h2v2h-2zM222 438h2v1h-2zM225 438h1v1h-1zM224 215h2v2h-2zM224 439h2v1h-2zM227 438h1v1h-1zM226 214h2v2h-2zM226 439h2v1h-2zM229 439h1v1h-1zM228 214h2v2h-2zM228 440h2v1h-2zM231 440h1v1h-1zM230 213h2v2h-2zM230 441h2v1h-2zM233 440h1v1h-1zM232 213h2v2h-2zM232 441h2v1h-2zM235 441h1v1h-1zM234 212h2v2h-2zM234 442h2v1h-2zM237 442h1v1h-1zM236 212h2v2h-2zM236 443h2v1h-2zM239 442h1v1h-1zM238 211h2v2h-2zM238 443h2v1h-2zM241 443h1v1h-1zM240 211h2v2h-2zM240 444h2v1h-2zM243 443h1v1h-1zM242 210h2v2h-2zM242 444h2v1h-2zM245 444h1v1h-1zM244 210h2v2h-2zM244 445h2v1h-2zM247 445h1v1h-1zM246 209h2v2h-2zM246 446h2v1h-2zM249 445h1v1h-1zM248 209h2v2h-2zM248 446h2v1h-2zM251 446h1v1h-1zM250 208h2v2h-2zM250 447h2v1h-2zM253 447h1v1h-1zM252 208h2v2h-2zM252 448h2v1h-2zM255 447h1v1h-1zM254 208h2v2h-2zM254 448h2v1h-2zM257 448h1v1h-1zM256 207h2v2h-2zM256 449h2v1h-2zM259 448h1v1h-1zM258 207h2v2h-2zM258 449h2v1h-2zM261 449h1v1h-1zM260 206h2v2h-2zM260 450h2v1h-2zM263 450h1v1h-1zM262 206h2v2h-2zM262 451h2v1h-2zM265 450h1v1h-1zM264 205h2v2h-2zM264 451h2v1h-2zM267 451h1v1h-1zM266 205h2v2h-2zM266 452h2v1h-2zM269 451h1v1h-1zM268 204h2v2h-2zM268 452h2v1h-2zM271 452h1v1h-1zM270 204h2v2h-2zM270 453h2v1h-2zM273 452h1v1h-1zM272 203h2v2h-2zM272 453h2v1h-2zM275 453h1v1h-1zM274 203h2v2h-2zM274 454h2v1h-2zM277 454h1v1h-1zM276 202h2v2h-2zM276 455h2v1h-2zM279 454h1v1h-1zM278 202h2v2h-2zM278 455h2v1h-2zM281 455h1v1h-1zM280 201h2v2h-2zM280 456h2v1h-2zM283 455h1v1h-1zM282 201h2v2h-2zM282 456h2v1h-2zM285 456h1v1h-1zM284 200h2v2h-2zM284 457h2v1h-2zM287 456h1v1h-1zM286 200h2v2h-2zM286 457h2v1h-2zM289 457h1v1h-1zM288 199h2v2h-2zM288 458h2v1h-2zM291 457h1v1h-1zM290 199h2v2h-2zM290 458h2v1h-2zM293 458h1v1h-1zM292 198h2v2h-2zM292 459h2v1h-2zM295 458h1v1h-1zM294 198h2v2h-2zM294 459h2v1h-2zM297 459h1v1h-1zM296 198h2v2h-2zM296 460h2v1h-2zM299 459h1v1h-1zM298 197h2v2h-2zM298 460h2v1h-2zM301 460h1v1h-1zM300 197h2v2h-2zM300 461h2v1h-2zM303 460h1v1h-1zM302 196h2v2h-2zM302 461h2v1h-2zM305 461h1v1h-1zM304 196h2v2h-2zM304 462h2v1h-2zM307 461h1v1h-1zM306 195h2v2h-2zM306 462h2v1h-2zM309 462h1v1h-1zM308 195h2v2h-2zM308 463h2v1h-2zM311 462h1v1h-1zM310 194h2v2h-2zM310 463h2v1h-2zM313 462h1v1h-1zM312 194h2v2h-2zM312 463h2v1h-2zM315 463h1v1h-1zM314 194h2v2h-2zM314 464h2v1h-2zM317 463h1v1h-1zM316 193h2v2h-2zM316 464h2v1h-2zM319 464h1v1h-1zM318 193h2v2h-2zM318 465h2v1h-2zM321 464h1v1h-1zM320 192h2v2h-2zM320 465h2v1h-2zM323 464h1v1h-1zM322 192h2v2h-2zM322 465h2v1h-2zM325 465h1v1h-1zM324 192h2v2h-2zM324 466h2v1h-2zM327 465h1v1h-1zM326 191h2v2h-2zM326 466h2v1h-2zM329 465h1v1h-1zM328 191h2v2h-2zM328 466h2v1h-2zM331 466h1v1h-1zM330 190h2v2h-2zM330 467h2v1h-2zM333 466h1v1h-1zM332 190h2v2h-2zM332 467h2v1h-2zM335 466h1v1h-1zM334 190h2v2h-2zM334 467h2v1h-2zM337 467h1v1h-1zM336 189h2v2h-2zM336 468h2v1h-2zM339 467h1v1h-1zM338 189h2v2h-2zM338 468h2v1h-2zM341 467h1v1h-1zM340 189h2v2h-2zM340 468h2v1h-2zM343 468h1v1h-1zM342 188h2v2h-2zM342 469h2v1h-2zM345 468h1v1h-1zM344 188h2v2h-2zM344 469h2v1h-2zM347 468h1v1h-1zM346 188h2v2h-2zM346 469h2v1h-2zM349 468h1v1h-1zM348 187h2v2h-2zM348 469h2v1h-2zM351 468h1v1h-1zM350 187h2v2h-2zM350 469h2v1h-2zM353 469h1v1h-1zM352 187h2v2h-2zM352 470h2v1h-2zM355 469h1v1h-1zM354 187h2v2h-2zM354 470h2v1h-2zM357 469h1v1h-1zM356 186h2v2h-2zM356 470h2v1h-2zM359 469h1v1h-1zM358 186h2v2h-2zM358 470h2v1h-2zM361 469h1v1h-1zM360 186h2v2h-2zM360 470h2v1h-2zM363 469h1v1h-1zM362 186h2v2h-2zM362 470h2v1h-2zM365 469h1v1h-1zM364 185h2v2h-2zM364 470h2v1h-2zM367 469h1v1h-1zM366 185h2v2h-2zM366 470h2v1h-2zM369 469h1v1h-1zM368 185h2v2h-2zM368 470h2v1h-2zM371 470h1v1h-1zM370 185h2v2h-2zM370 471h2v1h-2zM373 470h1v1h-1zM372 185h2v2h-2zM372 471h2v1h-2zM375 470h1v1h-1zM374 185h2v2h-2zM374 471h2v1h-2zM377 470h1v1h-1zM376 185h2v2h-2zM376 471h2v1h-2zM379 470h1v1h-1zM378 184h2v2h-2zM378 471h2v1h-2zM381 470h1v1h-1zM380 184h2v2h-2zM380 471h2v1h-2zM383 470h1v1h-1zM382 184h2v2h-2zM382 471h2v1h-2zM385 469h1v1h-1zM384 184h2v2h-2zM384 470h2v1h-2zM387 469h1v1h-1zM386 184h2v2h-2zM386 470h2v1h-2zM389 469h1v1h-1zM388 184h2v2h-2zM388 470h2v1h-2zM391 469h1v1h-1zM390 184h2v2h-2zM390 470h2v1h-2zM393 469h1v1h-1zM392 184h2v2h-2zM392 470h2v1h-2zM395 469h1v1h-1zM394 184h2v2h-2zM394 470h2v1h-2zM397 469h1v1h-1zM396 184h2v2h-2zM396 470h2v1h-2zM399 469h1v1h-1zM398 184h2v2h-2zM398 470h2v1h-2zM401 469h1v1h-1zM400 184h2v2h-2zM400 470h2v1h-2zM403 468h1v1h-1zM402 184h2v2h-2zM402 469h2v1h-2zM405 468h1v1h-1zM404 184h2v2h-2zM404 469h2v1h-2zM407 468h1v1h-1zM406 185h2v2h-2zM406 469h2v1h-2zM409 468h1v1h-1zM408 185h2v2h-2zM408 469h2v1h-2zM411 468h1v1h-1zM410 185h2v2h-2zM410 469h2v1h-2zM413 467h1v1h-1zM412 185h2v2h-2zM412 468h2v1h-2zM415 467h1v1h-1zM414 185h2v2h-2zM414 468h2v1h-2zM417 467h1v1h-1zM416 185h2v2h-2zM416 468h2v1h-2zM419 467h1v1h-1zM418 185h2v2h-2zM418 468h2v1h-2zM421 466h1v1h-1zM420 186h2v2h-2zM420 467h2v1h-2zM423 466h1v1h-1zM422 186h2v2h-2zM422 467h2v1h-2zM425 466h1v1h-1zM424 186h2v2h-2zM424 467h2v1h-2zM427 465h1v1h-1zM426 186h2v2h-2zM426 466h2v1h-2zM429 465h1v1h-1zM428 187h2v2h-2zM428 466h2v1h-2zM431 465h1v1h-1zM430 187h2v2h-2zM430 466h2v1h-2zM433 464h1v1h-1zM432 187h2v2h-2zM432 465h2v1h-2zM435 464h1v1h-1zM434 187h2v2h-2zM434 465h2v1h-2zM437 464h1v1h-1zM436 188h2v2h-2zM436 465h2v1h-2zM439 463h1v1h-1zM438 188h2v2h-2zM438 464h2v1h-2zM441 463h1v1h-1zM440 188h2v2h-2zM440 464h2v1h-2zM443 463h1v1h-1zM442 189h2v2h-2zM442 464h2v1h-2zM445 462h1v1h-1zM444 189h2v2h-2zM444 463h2v1h-2zM447 462h1v1h-1zM446 190h2v2h-2zM446 463h2v1h-2zM449 461h1v1h-1zM448 190h2v2h-2zM448 462h2v1h-2zM451 461h1v1h-1zM450 190h2v2h-2zM450 462h2v1h-2zM453 461h1v1h-1zM452 191h2v2h-2zM452 462h2v1h-2zM455 460h1v1h-1zM454 191h2v2h-2zM454 461h2v1h-2zM457 460h1v1h-1zM456 192h2v2h-2zM456 461h2v1h-2zM459 459h1v1h-1zM458 192h2v2h-2zM458 460h2v1h-2zM461 459h1v1h-1zM460 192h2v2h-2zM460 460h2v1h-2zM463 458h1v1h-1zM462 193h2v2h-2zM462 459h2v1h-2zM465 458h1v1h-1zM464 193h2v2h-2zM464 459h2v1h-2zM467 458h1v1h-1zM466 194h2v2h-2zM466 459h2v1h-2zM469 457h1v1h-1zM468 194h2v2h-2zM468 458h2v1h-2zM471 457h1v1h-1zM470 195h2v2h-2zM470 458h2v1h-2zM473 456h1v1h-1zM472 195h2v2h-2zM472 457h2v1h-2zM475 456h1v1h-1zM474 196h2v2h-2zM474 457h2v1h-2zM477 455h1v1h-1zM476 196h2v2h-2zM476 456h2v1h-2zM479 455h1v1h-1zM478 197h2v2h-2zM478 456h2v1h-2zM481 455h1v1h-1zM480 197h2v2h-2zM480 456h2v1h-2zM483 454h1v1h-1zM482 198h2v2h-2zM482 455h2v1h-2zM485 454h1v1h-1zM484 198h2v2h-2zM484 455h2v1h-2zM487 453h1v1h-1zM486 199h2v2h-2zM486 454h2v1h-2zM489 453h1v1h-1zM488 199h2v2h-2zM488 454h2v1h-2zM491 452h1v1h-1zM490 200h2v2h-2zM490 453h2v1h-2zM493 452h1v1h-1zM492 201h2v2h-2zM492 453h2v1h-2zM495 451h1v1h-1zM494 201h2v2h-2zM494 452h2v1h-2zM497 451h1v1h-1zM496 202h2v2h-2zM496 452h2v1h-2zM499 450h1v1h-1zM498 202h2v2h-2zM498 451h2v1h-2zM501 450h1v1h-1zM500 203h2v2h-2zM500 451h2v1h-2zM503 450h1v1h-1zM502 203h2v2h-2zM502 451h2v1h-2zM505 449h1v1h-1zM504 204h2v2h-2zM504 450h2v1h-2zM507 449h1v1h-1zM506 205h2v2h-2zM506 450h2v1h-2zM509 448h1v1h-1zM508 205h2v2h-2zM508 449h2v1h-2zM511 448h1v1h-1zM510 206h2v2h-2zM510 449h2v1h-2zM513 447h1v1h-1zM512 206h2v2h-2zM512 448h2v1h-2zM515 447h1v1h-1zM514 207h2v2h-2zM514 448h2v1h-2zM517 446h1v1h-1zM516 208h2v2h-2zM516 447h2v1h-2zM519 446h1v1h-1zM518 208h2v2h-2zM518 447h2v1h-2zM521 445h1v1h-1zM520 209h2v2h-2zM520 446h2v1h-2zM523 445h1v1h-1zM522 210h2v2h-2zM522 446h2v1h-2zM525 444h1v1h-1zM524 210h2v2h-2zM524 445h2v1h-2zM527 444h1v1h-1zM526 211h2v2h-2zM526 445h2v1h-2zM529 444h1v1h-1zM528 212h2v2h-2zM528 445h2v1h-2zM531 443h1v1h-1zM530 212h2v2h-2zM530 444h2v1h-2zM533 443h1v1h-1zM532 213h2v2h-2zM532 444h2v1h-2zM535 442h1v1h-1zM534 213h2v2h-2zM534 443h2v1h-2zM537 442h1v1h-1zM536 214h2v2h-2zM536 443h2v1h-2zM539 441h1v1h-1zM538 215h2v2h-2zM538 442h2v1h-2zM541 441h1v1h-1zM540 215h2v2h-2zM540 442h2v1h-2zM543 440h1v1h-1zM542 216h2v2h-2zM542 441h2v1h-2zM545 440h1v1h-1zM544 217h2v2h-2zM544 441h2v1h-2zM547 439h1v1h-1zM546 217h2v2h-2zM546 440h2v1h-2zM549 439h1v1h-1zM548 218h2v2h-2zM548 440h2v1h-2zM551 438h1v1h-1zM550 219h2v2h-2zM550 439h2v1h-2zM553 438h1v1h-1zM552 219h2v2h-2zM552 439h2v1h-2zM555 438h1v1h-1zM554 220h2v2h-2zM554 439h2v1h-2zM557 437h1v1h-1zM556 221h2v2h-2zM556 438h2v1h-2zM559 437h1v1h-1zM558 221h2v2h-2zM558 438h2v1h-2zM561 436h1v1h-1zM560 222h2v2h-2zM560 437h2v1h-2zM563 436h1v1h-1zM562 223h2v2h-2zM562 437h2v1h-2zM565 435h1v1h-1zM564 223h2v2h-2zM564 436h2v1h-2zM567 435h1v1h-1zM566 224h2v2h-2zM566 436h2v1h-2zM569 434h1v1h-1zM568 225h2v2h-2zM568 435h2v1h-2zM571 434h1v1h-1zM570 225h2v2h-2zM570 435h2v1h-2zM573 433h1v1h-1zM572 226h2v2h-2zM572 434h2v1h-2zM575 433h1v1h-1zM574 227h2v2h-2zM574 434h2v1h-2zM577 432h1v1h-1zM576 227h2v2h-2zM576 433h2v1h-2zM579 432h1v1h-1zM578 228h2v2h-2zM578 433h2v1h-2zM581 432h1v1h-1zM580 229h2v2h-2zM580 433h2v1h-2zM583 431h1v1h-1zM582 229h2v2h-2zM582 432h2v1h-2zM585 431h1v1h-1zM584 230h2v2h-2zM584 432h2v1h-2zM587 430h1v1h-1zM586 231h2v2h-2zM586 431h2v1h-2zM589 430h1v1h-1zM588 231h2v2h-2zM588 431h2v1h-2zM591 429h1v1h-1zM590 232h2v2h-2zM590 430h2v1h-2zM593 429h1v1h-1zM592 233h2v2h-2zM592 430h2v1h-2zM595 428h1v1h-1zM594 233h2v2h-2zM594 429h2v1h-2zM597 428h1v1h-1zM596 234h2v2h-2zM596 429h2v1h-2zM599 427h1v1h-1zM598 234h2v2h-2zM598 428h2v1h-2zM601 427h1v1h-1zM600 235h2v2h-2zM600 428h2v1h-2zM603 426h1v1h-1zM602 236h2v2h-2zM602 427h2v1h-2zM605 426h1v1h-1zM604 236h2v2h-2zM604 427h2v1h-2zM607 425h1v1h-1zM606 237h2v2h-2zM606 426h2v1h-2zM609 425h1v1h-1zM608 238h2v2h-2zM608 426h2v1h-2zM611 424h1v1h-1zM610 238h2v2h-2zM610 425h2v1h-2zM613 424h1v1h-1zM612 239h2v2h-2zM612 425h2v1h-2zM615 423h1v1h-1zM614 240h2v2h-2zM614 424h2v1h-2zM617 423h1v1h-1zM616 240h2v2h-2zM616 424h2v1h-2zM619 422h1v1h-1zM618 241h2v2h-2zM618 423h2v1h-2zM621 422h1v1h-1zM620 241h2v2h-2zM620 423h2v1h-2zM623 421h1v1h-1zM622 242h2v2h-2zM622 422h2v1h-2zM625 421h1v1h-1zM624 243h2v2h-2zM624 422h2v1h-2zM627 420h1v1h-1zM626 243h2v2h-2zM626 421h2v1h-2zM629 420h1v1h-1zM628 244h2v2h-2zM628 421h2v1h-2zM631 419h1v1h-1zM630 244h2v2h-2zM630 420h2v1h-2zM633 419h1v1h-1zM632 245h2v2h-2zM632 420h2v1h-2zM635 418h1v1h-1zM634 246h2v2h-2zM634 419h2v1h-2zM637 418h1v1h-1zM636 246h2v2h-2zM636 419h2v1h-2zM639 417h1v1h-1zM638 247h2v2h-2zM638 418h2v1h-2zM641 417h1v1h-1zM640 247h2v2h-2zM640 418h2v1h-2zM643 416h1v1h-1zM642 248h2v2h-2zM642 417h2v1h-2zM645 416h1v1h-1zM644 248h2v2h-2zM644 417h2v1h-2zM647 415h1v1h-1zM646 249h2v2h-2zM646 416h2v1h-2zM649 415h1v1h-1zM648 249h2v2h-2zM648 416h2v1h-2zM651 414h1v1h-1zM650 250h2v2h-2zM650 415h2v1h-2zM653 414h1v1h-1zM652 250h2v2h-2zM652 415h2v1h-2zM655 413h1v1h-1zM654 251h2v2h-2zM654 414h2v1h-2zM657 413h1v1h-1zM656 251h2v2h-2zM656 414h2v1h-2zM659 412h1v1h-1zM658 252h2v2h-2zM658 413h2v1h-2zM661 412h1v1h-1zM660 252h2v2h-2zM660 413h2v1h-2zM663 411h1v1h-1zM662 253h2v2h-2zM662 412h2v1h-2zM665 411h1v1h-1zM664 253h2v2h-2zM664 412h2v1h-2zM667 410h1v1h-1zM666 254h2v2h-2zM666 411h2v1h-2zM669 410h1v1h-1zM668 254h2v2h-2zM668 411h2v1h-2zM671 409h1v1h-1zM670 255h2v2h-2zM670 410h2v1h-2zM673 409h1v1h-1zM672 255h2v2h-2zM672 410h2v1h-2zM675 408h1v1h-1zM674 256h2v2h-2zM674 409h2v1h-2zM677 408h1v1h-1zM676 256h2v2h-2zM676 409h2v1h-2zM679 407h1v1h-1zM678 256h2v2h-2zM678 408h2v1h-2zM681 407h1v1h-1zM680 257h2v2h-2zM680 408h2v1h-2zM683 406h1v1h-1zM682 257h2v2h-2zM682 407h2v1h-2zM685 406h1v1h-1zM684 258h2v2h-2zM684 407h2v1h-2zM687 405h1v1h-1zM686 258h2v2h-2zM686 406h2v1h-2zM689 405h1v1h-1zM688 258h2v2h-2zM688 406h2v1h-2zM691 404h1v1h-1zM690 259h2v2h-2zM690 405h2v1h-2zM693 404h1v1h-1zM692 259h2v2h-2zM692 405h2v1h-2zM695 403h1v1h-1zM694 259h2v2h-2zM694 404h2v1h-2zM697 403h1v1h-1zM696 260h2v2h-2zM696 404h2v1h-2zM699 402h1v1h-1zM698 260h2v2h-2zM698 403h2v1h-2zM701 402h1v1h-1zM700 260h2v2h-2zM700 403h2v1h-2zM703 402h1v1h-1zM702 260h2v2h-2zM702 403h2v1h-2zM705 401h1v1h-1zM704 261h2v2h-2zM704 402h2v1h-2zM707 401h1v1h-1zM706 261h2v2h-2zM706 402h2v1h-2zM709 400h1v1h-1zM708 261h2v2h-2zM708 401h2v1h-2zM711 400h1v1h-1zM710 261h2v2h-2zM710 401h2v1h-2zM713 399h1v1h-1zM712 261h2v2h-2zM712 400h2v1h-2zM715 399h1v1h-1zM714 262h2v2h-2zM714 400h2v1h-2zM717 399h1v1h-1zM716 262h2v2h-2zM716 400h2v1h-2zM719 398h1v1h-1zM718 262h2v2h-2zM718 399h2v1h-2zM721 398h1v1h-1zM720 262h2v2h-2zM720 399h2v1h-2zM723 398h1v1h-1zM722 262h2v2h-2zM722 399h2v1h-2zM725 397h1v1h-1zM724 262h2v2h-2zM724 398h2v1h-2zM727 397h1v1h-1zM726 262h2v2h-2zM726 398h2v1h-2zM729 397h1v1h-1zM728 262h2v2h-2zM728 398h2v1h-2zM731 396h1v1h-1zM730 262h2v2h-2zM730 397h2v1h-2zM733 396h1v1h-1zM732 262h2v2h-2zM732 397h2v1h-2zM735 396h1v1h-1zM734 262h2v2h-2zM734 397h2v1h-2zM737 395h1v1h-1zM736 262h2v2h-2zM736 396h2v1h-2zM739 395h1v1h-1zM738 262h2v2h-2zM738 396h2v1h-2zM741 395h1v1h-1zM740 262h2v2h-2zM740 396h2v1h-2zM743 395h1v1h-1zM742 262h2v2h-2zM742 396h2v1h-2zM745 395h1v1h-1zM744 262h2v2h-2zM744 396h2v1h-2zM747 394h1v1h-1zM746 262h2v2h-2zM746 395h2v1h-2zM749 394h1v1h-1zM748 262h2v2h-2zM748 395h2v1h-2zM751 394h1v1h-1zM750 262h2v2h-2zM750 395h2v1h-2zM753 394h1v1h-1zM752 262h2v2h-2zM752 395h2v1h-2zM755 394h1v1h-1zM754 261h2v2h-2zM754 395h2v1h-2zM757 394h1v1h-1zM756 261h2v2h-2zM756 395h2v1h-2zM759 394h1v1h-1zM758 261h2v2h-2zM758 395h2v1h-2zM761 394h1v1h-1zM760 261h2v2h-2zM760 395h2v1h-2zM763 393h1v1h-1zM762 261h2v2h-2zM762 394h2v1h-2zM765 393h1v1h-1zM764 260h2v2h-2zM764 394h2v1h-2zM767 393h1v1h-1zM766 260h2v2h-2zM766 394h2v1h-2zM769 393h1v1h-1zM768 260h2v2h-2zM768 394h2v1h-2zM771 393h1v1h-1zM770 260h2v2h-2zM770 394h2v1h-2zM773 393h1v1h-1zM772 259h2v2h-2zM772 394h2v1h-2z"/><path fill="#e8e8c4" d="M42 393h1v1h-1zM44 393h1v1h-1zM46 394h1v1h-1zM48 394h1v1h-1zM50 394h1v1h-1zM52 394h1v1h-1zM54 394h1v1h-1zM56 394h1v1h-1zM58 394h1v1h-1zM60 394h1v1h-1zM62 395h1v1h-1zM64 395h1v1h-1zM66 395h1v1h-1zM68 395h1v1h-1zM70 395h1v1h-1zM72 396h1v1h-1zM74 396h1v1h-1zM76 396h1v1h-1zM78 397h1v1h-1zM80 397h1v1h-1zM82 397h1v1h-1zM84 398h1v1h-1zM86 398h1v1h-1zM88 398h1v1h-1zM90 399h1v1h-1zM92 399h1v1h-1zM94 399h1v1h-1zM96 400h1v1h-1zM98 400h1v1h-1zM100 401h1v1h-1zM102 401h1v1h-1zM104 402h1v1h-1zM106 402h1v1h-1zM108 402h1v1h-1zM110 403h1v1h-1zM112 403h1v1h-1zM114 404h1v1h-1zM116 404h1v1h-1zM118 405h1v1h-1zM120 405h1v1h-1zM122 406h1v1h-1zM124 406h1v1h-1zM126 407h1v1h-1zM128 408h1v1h-1zM130 408h1v1h-1zM132 409h1v1h-1zM134 409h1v1h-1zM136 410h1v1h-1zM138 410h1v1h-1zM140 411h1v1h-1zM142 411h1v1h-1zM144 412h1v1h-1zM146 413h1v1h-1zM148 413h1v1h-1zM150 414h1v1h-1zM152 414h1v1h-1zM154 415h1v1h-1zM156 416h1v1h-1zM158 416h1v1h-1zM160 417h1v1h-1zM162 418h1v1h-1zM164 418h1v1h-1zM166 419h1v1h-1zM168 419h1v1h-1zM170 420h1v1h-1zM172 421h1v1h-1zM174 421h1v1h-1zM176 422h1v1h-1zM178 423h1v1h-1zM180 423h1v1h-1zM182 424h1v1h-1zM184 425h1v1h-1zM186 425h1v1h-1zM188 426h1v1h-1zM190 427h1v1h-1zM192 427h1v1h-1zM194 428h1v1h-1zM196 428h1v1h-1zM198 429h1v1h-1zM200 430h1v1h-1zM202 430h1v1h-1zM204 431h1v1h-1zM206 432h1v1h-1zM208 432h1v1h-1zM210 433h1v1h-1zM212 434h1v1h-1zM214 434h1v1h-1zM216 435h1v1h-1zM218 436h1v1h-1zM220 436h1v1h-1zM222 437h1v1h-1zM224 438h1v1h-1zM226 438h1v1h-1zM228 439h1v1h-1zM230 440h1v1h-1zM232 440h1v1h-1zM234 441h1v1h-1zM236 442h1v1h-1zM238 442h1v1h-1zM240 443h1v1h-1zM242 443h1v1h-1zM244 444h1v1h-1zM246 445h1v1h-1zM248 445h1v1h-1zM250 446h1v1h-1zM252 447h1v1h-1zM254 447h1v1h-1zM256 448h1v1h-1zM258 448h1v1h-1zM260 449h1v1h-1zM262 450h1v1h-1zM264 450h1v1h-1zM266 451h1v1h-1zM268 451h1v1h-1zM270 452h1v1h-1zM272 452h1v1h-1zM274 453h1v1h-1zM276 454h1v1h-1zM278 454h1v1h-1zM280 455h1v1h-1zM282 455h1v1h-1zM284 456h1v1h-1zM286 456h1v1h-1zM288 457h1v1h-1zM290 457h1v1h-1zM292 458h1v1h-1zM294 458h1v1h-1zM296 459h1v1h-1zM298 459h1v1h-1zM300 460h1v1h-1zM302 460h1v1h-1zM304 461h1v1h-1zM306 461h1v1h-1zM308 462h1v1h-1zM310 462h1v1h-1zM312 462h1v1h-1zM314 463h1v1h-1zM316 463h1v1h-1zM318 464h1v1h-1zM320 464h1v1h-1zM322 464h1v1h-1zM324 465h1v1h-1zM326 465h1v1h-1zM328 465h1v1h-1zM330 466h1v1h-1zM332 466h1v1h-1zM334 466h1v1h-1zM336 467h1v1h-1zM338 467h1v1h-1zM340 467h1v1h-1zM342 468h1v1h-1zM344 468h1v1h-1zM346 468h1v1h-1zM348 468h1v1h-1zM350 468h1v1h-1zM352 469h1v1h-1zM354 469h1v1h-1zM356 469h1v1h-1zM358 469h1v1h-1zM360 469h1v1h-1zM362 469h1v1h-1zM364 469h1v1h-1zM366 469h1v1h-1zM368 469h1v1h-1zM370 470h1v1h-1zM372 470h1v1h-1zM374 470h1v1h-1zM376 470h1v1h-1zM378 470h1v1h-1zM380 470h1v1h-1zM382 470h1v1h-1zM384 469h1v1h-1zM386 469h1v1h-1zM388 469h1v1h-1zM390 469h1v1h-1zM392 469h1v1h-1zM394 469h1v1h-1zM396 469h1v1h-1zM398 469h1v1h-1zM400 469h1v1h-1zM402 468h1v1h-1zM404 468h1v1h-1zM406 468h1v1h-1zM408 468h1v1h-1zM410 468h1v1h-1zM412 467h1v1h-1zM414 467h1v1h-1zM416 467h1v1h-1zM418 467h1v1h-1zM420 466h1v1h-1zM422 466h1v1h-1zM424 466h1v1h-1zM426 465h1v1h-1zM428 465h1v1h-1zM430 465h1v1h-1zM432 464h1v1h-1zM434 464h1v1h-1zM436 464h1v1h-1zM438 463h1v1h-1zM440 463h1v1h-1zM442 463h1v1h-1zM444 462h1v1h-1zM446 462h1v1h-1zM448 461h1v1h-1zM450 461h1v1h-1zM452 461h1v1h-1zM454 460h1v1h-1zM456 460h1v1h-1zM458 459h1v1h-1zM460 459h1v1h-1zM462 458h1v1h-1zM464 458h1v1h-1zM466 458h1v1h-1zM468 457h1v1h-1zM470 457h1v1h-1zM472 456h1v1h-1zM474 456h1v1h-1zM476 455h1v1h-1zM478 455h1v1h-1zM480 455h1v1h-1zM482 454h1v1h-1zM484 454h1v1h-1zM486 453h1v1h-1zM488 453h1v1h-1zM490 452h1v1h-1zM492 452h1v1h-1zM494 451h1v1h-1zM496 451h1v1h-1zM498 450h1v1h-1zM500 450h1v1h-1zM502 450h1v1h-1zM504 449h1v1h-1zM506 449h1v1h-1zM508 448h1v1h-1zM510 448h1v1h-1zM512 447h1v1h-1zM514 447h1v1h-1zM516 446h1v1h-1zM518 446h1v1h-1zM520 445h1v1h-1zM522 445h1v1h-1zM524 444h1v1h-1zM526 444h1v1h-1zM528 444h1v1h-1zM530 443h1v1h-1zM532 443h1v1h-1zM534 442h1v1h-1zM536 442h1v1h-1zM538 441h1v1h-1zM540 441h1v1h-1zM542 440h1v1h-1zM544 440h1v1h-1zM546 439h1v1h-1zM548 439h1v1h-1zM550 438h1v1h-1zM552 438h1v1h-1zM554 438h1v1h-1zM556 437h1v1h-1zM558 437h1v1h-1zM560 436h1v1h-1zM562 436h1v1h-1zM564 435h1v1h-1zM566 435h1v1h-1zM568 434h1v1h-1zM570 434h1v1h-1zM572 433h1v1h-1zM574 433h1v1h-1zM576 432h1v1h-1zM578 432h1v1h-1zM580 432h1v1h-1zM582 431h1v1h-1zM584 431h1v1h-1zM586 430h1v1h-1zM588 430h1v1h-1zM590 429h1v1h-1zM592 429h1v1h-1zM594 428h1v1h-1zM596 428h1v1h-1zM598 427h1v1h-1zM600 427h1v1h-1zM602 426h1v1h-1zM604 426h1v1h-1zM606 425h1v1h-1zM608 425h1v1h-1zM610 424h1v1h-1zM612 424h1v1h-1zM614 423h1v1h-1zM616 423h1v1h-1zM618 422h1v1h-1zM620 422h1v1h-1zM622 421h1v1h-1zM624 421h1v1h-1zM626 420h1v1h-1zM628 420h1v1h-1zM630 419h1v1h-1zM632 419h1v1h-1zM634 418h1v1h-1zM636 418h1v1h-1zM638 417h1v1h-1zM640 417h1v1h-1zM642 416h1v1h-1zM644 416h1v1h-1zM646 415h1v1h-1zM648 415h1v1h-1zM650 414h1v1h-1zM652 414h1v1h-1zM654 413h1v1h-1zM656 413h1v1h-1zM658 412h1v1h-1zM660 412h1v1h-1zM662 411h1v1h-1zM664 411h1v1h-1zM666 410h1v1h-1zM668 410h1v1h-1zM670 409h1v1h-1zM672 409h1v1h-1zM674 408h1v1h-1zM676 408h1v1h-1zM678 407h1v1h-1zM680 407h1v1h-1zM682 406h1v1h-1zM684 406h1v1h-1zM686 405h1v1h-1zM688 405h1v1h-1zM690 404h1v1h-1zM692 404h1v1h-1zM694 403h1v1h-1zM696 403h1v1h-1zM698 402h1v1h-1zM700 402h1v1h-1zM702 402h1v1h-1zM704 401h1v1h-1zM706 401h1v1h-1zM708 400h1v1h-1zM710 400h1v1h-1zM712 399h1v1h-1zM714 399h1v1h-1zM716 399h1v1h-1zM718 398h1v1h-1zM720 398h1v1h-1zM722 398h1v1h-1zM724 397h1v1h-1zM726 397h1v1h-1zM728 397h1v1h-1zM730 396h1v1h-1zM732 396h1v1h-1zM734 396h1v1h-1zM736 395h1v1h-1zM738 395h1v1h-1zM740 395h1v1h-1zM742 395h1v1h-1zM744 395h1v1h-1zM746 394h1v1h-1zM748 394h1v1h-1zM750 394h1v1h-1zM752 394h1v1h-1zM754 394h1v1h-1zM756 394h1v1h-1zM758 394h1v1h-1zM760 394h1v1h-1zM762 393h1v1h-1zM764 393h1v1h-1zM766 393h1v1h-1zM768 393h1v1h-1zM770 393h1v1h-1zM772 393h1v1h-1z"/><path fill="none" stroke="#000" stroke-width="1" d="M42.5 497.5V157.5H774.5V497.5H42.5"/><path fill="none" stroke="#000" stroke-width="1" d="M45.5 158v3M45.5 494v3M59.5 158v3M59.5 494v3M73.5 158v3M73.5 494v3M87.5 158v3M87.5 494v3M101.5 158v3M101.5 494v3M115.5 158v3M115.5 494v3M129.5 158v3M129.5 494v3M143.5 158v3M143.5 494v3M157.5 158v3M157.5 494v3M171.5 158v3M171.5 494v3M185.5 158v3M185.5 494v3M199.5 158v3M199.5 494v3M213.5 158v3M213.5 494v3M227.5 158v3M227.5 494v3M241.5 158v3M241.5 494v3M255.5 158v3M255.5 494v3M269.5 158v3M269.5 494v3M283.5 158v3M283.5 494v3M297.5 158v3M297.5 494v3M311.5 158v3M311.5 494v3M325.5 158v3M325.5 494v3M339.5 158v3M339.5 494v3M353.5 158v3M353.5 494v3M367.5 158v3M367.5 494v3M381.5 158v3M381.5 494v3M395.5 158v3M395.5 494v3M409.5 158v3M409.5 494v3M423.5 158v3M423.5 494v3M437.5 158v3M437.5 494v3M451.5 158v3M451.5 494v3M465.5 158v3M465.5 494v3M479.5 158v3M479.5 494v3M493.5 158v3M493.5 494v3M507.5 158v3M507.5 494v3M521.5 158v3M521.5 494v3M535.5 158v3M535.5 494v3M549.5 158v3M549.5 494v3M563.5 158v3M563.5 494v3M577.5 158v3M577.5 494v3M591.5 158v3M591.5 494v3M605.5 158v3M605.5 494v3M619.5 158v3M619.5 494v3M633.5 158v3M633.5 494v3M647.5 158v3M647.5 494v3M661.5 158v3M661.5 494v3M675.5 158v3M675.5 494v3M689.5 158v3M689.5 494v3M703.5 158v3M703.5 494v3M717.5 158v3M717.5 494v3M731.5 158v3M731.5 494v3M745.5 158v3M745.5 494v3M759.5 158v3M759.5 494v3M773.5 158v3M773.5 494v3M43 175.5h3M771 175.5h3M43 192.5h3M771 192.5h3M43 209.5h3M771 209.5h3M43 226.5h3M771 226.5h3M43 243.5h3M771 243.5h3M43 260.5h3M771 260.5h3M43 277.5h3M771 277.5h3M43 294.5h3M771 294.5h3M43 311.5h3M771 311.5h3M43 328.5h3M771 328.5h3M43 345.5h3M771 345.5h3M43 362.5h3M771 362.5h3M43 379.5h3M771 379.5h3M43 396.5h3M771 396.5h3M43 413.5h3M771 413.5h3M43 430.5h3M771 430.5h3M43 447.5h3M771 447.5h3M43 464.5h3M771 464.5h3M43 481.5h3M771 481.5h3"/></svg>
<div class="a" style="left:11px;top:535px;width:801px;height:14px;background:#ece9d8;border-top:1px solid #f1efe2"></div>
<div class="a" style="left:11px;top:536px;width:15px;height:13px;background:#ece9d8;border-top:2px solid #fff;border-left:2px solid #fff;border-right:1px solid #000"></div>
<svg class="a" style="left:14px;top:539px" width="6" height="8"><path d="M4.5 0.5L0.8 3.5L4.5 6.5Z" fill="none" stroke="#000"/></svg>
<div class="a" style="left:26px;top:536px;width:771px;height:13px;background:#ece9d8;border-top:2px solid #fff;border-left:2px solid #fff;border-right:1px solid #000"></div>
<div class="a" style="left:797px;top:536px;width:15px;height:13px;background:#ece9d8;border-top:2px solid #fff;border-left:2px solid #fff;border-right:1px solid #000"></div>
<svg class="a" style="left:803px;top:539px" width="6" height="8"><path d="M0.5 0.5L4.2 3.5L0.5 6.5Z" fill="none" stroke="#000"/></svg>
<div class="a" style="left:10px;top:549px;width:802px;height:15px;background:#fcf2d0;border-top:1px solid #000;border-bottom:1px solid #000;border-left:1px solid #000"></div>
<div class="t " style="left:16px;top:550px;letter-spacing:-0.6px">Mask:&nbsp; Circumzenithal</div>
<div class="t " style="left:329px;top:550px;letter-spacing:-0.6px">Night when Sun below -18 degrees</div>
<svg class="a" style="left:0;top:0" width="822" height="6"><path d="M0 0H5L0 5Z" fill="#d4d8e0"/><path d="M822 0H817L822 5Z" fill="#d4d8e0"/></svg>
</body></html>
